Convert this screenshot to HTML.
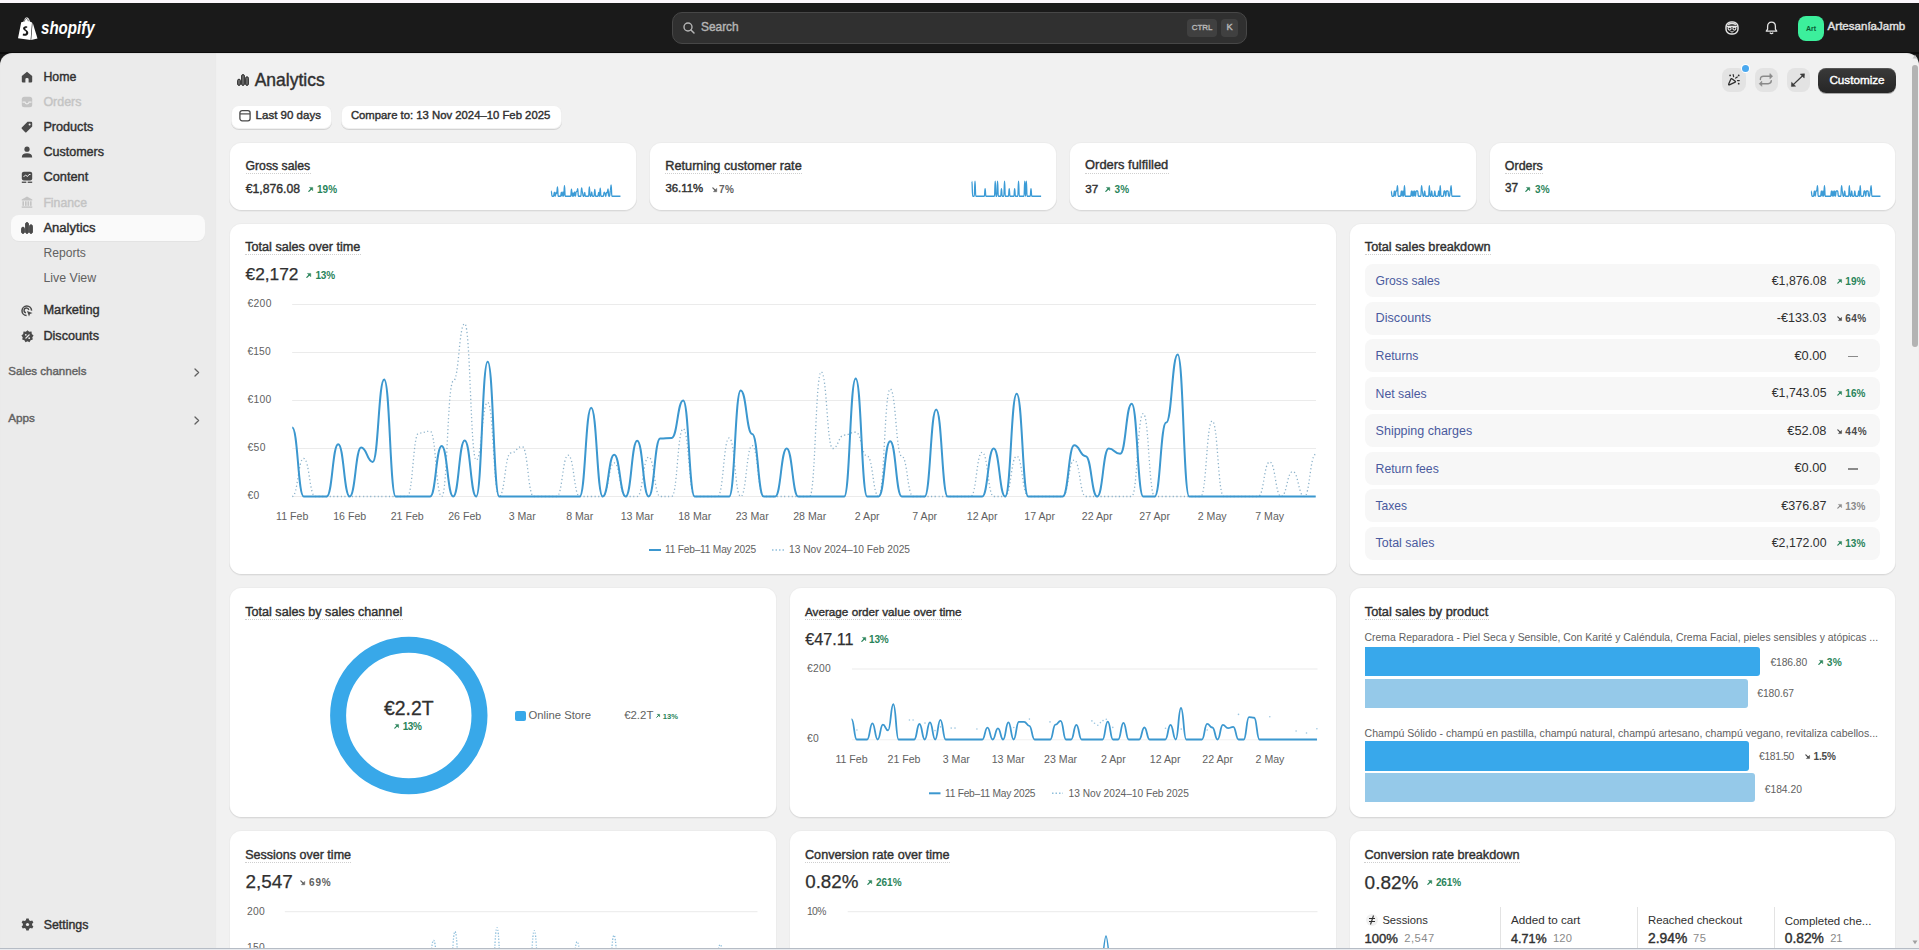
<!DOCTYPE html><html><head><meta charset="utf-8"><title>Analytics</title><style>
*{box-sizing:border-box;margin:0;padding:0}
html,body{width:1919px;height:950px;overflow:hidden;background:#1a1a1a;font-family:"Liberation Sans",sans-serif;}
.a{position:absolute}
.t{position:absolute;white-space:nowrap}
.card{position:absolute;background:#fff;border-radius:12.5px;box-shadow:inset 0 0 0 1px rgba(0,0,0,.075),inset 0 -1px 0 0 rgba(0,0,0,.08),0 1px 0 0 rgba(0,0,0,.03)}
.ul{border-bottom:1px dotted #c4c4c4;padding-bottom:2px}
svg{position:absolute;overflow:visible}
</style></head><body>
<div class="a" style="left:0.00px;top:0.00px;width:1919.00px;height:3.00px;background:#fcf7fc"></div>
<div class="a" style="left:0.00px;top:51.60px;width:1919.00px;height:2.00px;background:#0c0c0c"></div>
<div class="a" style="left:0.00px;top:52.50px;width:216.00px;height:898.00px;background:#ebebeb;border-top-left-radius:12px;box-shadow:inset 0 1px 1px rgba(0,0,0,.06)"></div>
<div class="a" style="left:216.00px;top:52.50px;width:1703.00px;height:898.00px;background:#f1f1f1;border-top-right-radius:12px;box-shadow:inset 0 1px 1px rgba(0,0,0,.06)"></div>
<div class="a" style="left:0.00px;top:947.60px;width:1919.00px;height:1.20px;background:#b6bcc5"></div>
<div class="a" style="left:0.00px;top:948.80px;width:1919.00px;height:1.20px;background:#e8ebef"></div>
<svg style="left:17px;top:16px" width="22" height="24" viewBox="0 0 22 24">
<path d="M4.2 6.2 L1 22.3 L13.6 24 L15 6.4 L12.8 5.6 C12.6 4.2 12 2.2 10.4 1.6 C9.4 1.3 8.3 1.8 7.6 2.9 C7 3.8 6.6 4.9 6.4 5.7 Z" fill="#fff"/>
<path d="M15.6 6.5 L20.5 22.5 L14.2 23.9 Z" fill="#fff"/>
<path d="M7.3 5.5 C7.6 4.3 8.3 2.6 9.5 2.5 C10.6 2.5 11.1 4 11.3 5.2" fill="none" stroke="#1a1a1a" stroke-width="0.7"/>
<path d="M10.4 10.8 C9.6 10.3 8.6 10.2 7.8 10.4 C6.1 10.8 5.6 12.4 6.5 13.5 C7.3 14.5 8.9 14.9 9.1 16.2 C9.3 17.5 7.9 18.3 6.2 17.5 L5.6 19.3 C7.3 20.2 9.8 20 10.9 18.3 C11.9 16.6 11 15.2 9.6 14.2 C8.7 13.5 8.1 13.1 8.4 12.4 C8.7 11.7 9.5 11.8 10 12.1 Z" fill="#1a1a1a"/>
</svg>
<div class="t " style="top:19.06px;font-size:18.5px;line-height:18.5px;color:#fff;font-weight:700;left:40.70px;font-style:italic;transform-origin:0 0;transform:scaleX(0.816)">shopify</div>
<div class="a" style="left:672.00px;top:12.00px;width:575.00px;height:32.00px;background:#303030;border:1px solid #474747;border-radius:10px"></div>
<svg style="left:683px;top:22px" width="12" height="12" viewBox="0 0 12 12"><circle cx="5" cy="5" r="4" fill="none" stroke="#b5b5b5" stroke-width="1.4"/><path d="M8 8 L11 11" stroke="#b5b5b5" stroke-width="1.5" stroke-linecap="round"/></svg>
<div class="t " style="top:22.39px;font-size:11.9px;line-height:11.9px;color:#b5b5b5;left:701.00px;-webkit-text-stroke:0.4px #b5b5b5;">Search</div>
<div class="a" style="left:1187.00px;top:19.00px;width:30.00px;height:18.00px;background:#404040;border-radius:4px"></div>
<div class="t " style="top:24.13px;font-size:7.93px;line-height:7.93px;color:#b5b5b5;left:1202.00px;transform:translateX(-50%);-webkit-text-stroke:0.4px #b5b5b5;">CTRL</div>
<div class="a" style="left:1221.00px;top:19.00px;width:17.00px;height:18.00px;background:#404040;border-radius:4px"></div>
<div class="t " style="top:23.46px;font-size:9.29px;line-height:9.29px;color:#b5b5b5;left:1229.50px;transform:translateX(-50%);-webkit-text-stroke:0.4px #b5b5b5;">K</div>
<svg style="left:1725px;top:21px" width="14" height="14" viewBox="0 0 14 14"><rect x="1" y="1" width="12" height="12" rx="5" fill="none" stroke="#e3e3e3" stroke-width="1.5"/><path d="M1.5 5.5 H12.5" stroke="#e3e3e3" stroke-width="1.6"/><circle cx="4.6" cy="7.6" r="1.5" fill="none" stroke="#e3e3e3" stroke-width="1.1"/><circle cx="9.4" cy="7.6" r="1.5" fill="none" stroke="#e3e3e3" stroke-width="1.1"/><path d="M5.5 10.5 Q7 11.5 8.5 10.5" stroke="#e3e3e3" stroke-width="1" fill="none"/><path d="M3 3.5 Q7 1.5 11 3.5" stroke="#e3e3e3" stroke-width="1.5" fill="none"/></svg>
<svg style="left:1765px;top:21px" width="13" height="14" viewBox="0 0 13 14"><path d="M6.5 1.2 C4 1.2 2.6 3.1 2.6 5.4 V8.2 L1.3 10.2 H11.7 L10.4 8.2 V5.4 C10.4 3.1 9 1.2 6.5 1.2 Z" fill="none" stroke="#e3e3e3" stroke-width="1.3" stroke-linejoin="round"/><path d="M4.8 11.6 Q6.5 13.6 8.2 11.6" fill="none" stroke="#e3e3e3" stroke-width="1.3"/></svg>
<div class="a" style="left:1798.00px;top:16.00px;width:26.00px;height:25.00px;background:#3cef9c;border-radius:8px"></div>
<div class="t " style="top:25.15px;font-size:7.06px;line-height:7.06px;color:#0b5b36;font-weight:700;left:1811.00px;transform:translateX(-50%);">Art</div>
<div class="t " style="top:21.36px;font-size:11.55px;line-height:11.55px;color:#e3e3e3;left:1827.60px;-webkit-text-stroke:0.4px #e3e3e3;">ArtesaníaJamb</div>
<div class="a" style="left:11.00px;top:215.00px;width:194.00px;height:26.00px;background:#fafafa;border-radius:8px;box-shadow:0 1px 0 rgba(0,0,0,.03)"></div>
<div class="t " style="top:70.98px;font-size:12.33px;line-height:12.33px;color:#303030;left:43.40px;-webkit-text-stroke:0.4px #303030;">Home</div>
<div class="t " style="top:95.91px;font-size:12.47px;line-height:12.47px;color:#c4c4c4;left:43.40px;-webkit-text-stroke:0.4px #c4c4c4;">Orders</div>
<div class="t " style="top:120.82px;font-size:12.65px;line-height:12.65px;color:#303030;left:43.40px;-webkit-text-stroke:0.4px #303030;">Products</div>
<div class="t " style="top:145.86px;font-size:12.56px;line-height:12.56px;color:#303030;left:43.40px;-webkit-text-stroke:0.4px #303030;">Customers</div>
<div class="t " style="top:171.24px;font-size:12.82px;line-height:12.82px;color:#303030;left:43.40px;-webkit-text-stroke:0.4px #303030;">Content</div>
<div class="t " style="top:196.51px;font-size:12.26px;line-height:12.26px;color:#c4c4c4;left:43.40px;-webkit-text-stroke:0.4px #c4c4c4;">Finance</div>
<div class="t " style="top:221.13px;font-size:13.05px;line-height:13.05px;color:#303030;left:43.40px;-webkit-text-stroke:0.4px #303030;">Analytics</div>
<div class="t " style="top:247.08px;font-size:12.11px;line-height:12.11px;color:#616161;left:43.50px;">Reports</div>
<div class="t " style="top:271.96px;font-size:12.37px;line-height:12.37px;color:#616161;left:43.50px;">Live View</div>
<div class="t " style="top:304.44px;font-size:12.82px;line-height:12.82px;color:#303030;left:43.40px;-webkit-text-stroke:0.4px #303030;">Marketing</div>
<div class="t " style="top:329.82px;font-size:12.66px;line-height:12.66px;color:#303030;left:43.40px;-webkit-text-stroke:0.4px #303030;">Discounts</div>
<div class="t " style="top:365.67px;font-size:11.53px;line-height:11.53px;color:#616161;left:8.30px;-webkit-text-stroke:0.4px #616161;">Sales channels</div>
<div class="t " style="top:411.58px;font-size:11.71px;line-height:11.71px;color:#616161;left:8.30px;-webkit-text-stroke:0.4px #616161;">Apps</div>
<svg style="left:194px;top:367.8px" width="6" height="9" viewBox="0 0 6 9"><path d="M1 1 L4.6 4.5 L1 8" fill="none" stroke="#616161" stroke-width="1.3" stroke-linecap="round" stroke-linejoin="round"/></svg>
<svg style="left:194px;top:415.5px" width="6" height="9" viewBox="0 0 6 9"><path d="M1 1 L4.6 4.5 L1 8" fill="none" stroke="#616161" stroke-width="1.3" stroke-linecap="round" stroke-linejoin="round"/></svg>
<div class="t " style="top:918.66px;font-size:12.37px;line-height:12.37px;color:#303030;left:43.75px;-webkit-text-stroke:0.4px #303030;">Settings</div>
<svg style="left:21px;top:71px" width="12" height="12" viewBox="0 0 12 12"><path d="M6 0.8 L11.2 5 V10.6 Q11.2 11.4 10.4 11.4 H7.6 V8 Q7.6 7 6 7 Q4.4 7 4.4 8 V11.4 H1.6 Q0.8 11.4 0.8 10.6 V5 Z" fill="#4a4a4a"/></svg>
<svg style="left:21px;top:96px" width="12" height="12" viewBox="0 0 12 12"><rect x="0.8" y="0.8" width="10.4" height="10.4" rx="2.5" fill="#c4c4c4"/><path d="M1.5 6.2 H4 Q4.5 7.8 6 7.8 Q7.5 7.8 8 6.2 H10.5" fill="none" stroke="#ebebeb" stroke-width="1.2"/></svg>
<svg style="left:21px;top:121px" width="12" height="12" viewBox="0 0 12 12"><path d="M6.5 0.8 H10 Q11.2 0.8 11.2 2 V5.5 L5.4 11.2 Q4.8 11.8 4.2 11.2 L0.8 7.8 Q0.2 7.2 0.8 6.6 Z" fill="#4a4a4a"/><circle cx="8.6" cy="3.4" r="1" fill="#ebebeb"/></svg>
<svg style="left:21px;top:146px" width="12" height="12" viewBox="0 0 12 12"><circle cx="6" cy="3.2" r="2.6" fill="#4a4a4a"/><path d="M0.8 11.4 Q0.8 7.2 6 7.2 Q11.2 7.2 11.2 11.4 Z" fill="#4a4a4a"/></svg>
<svg style="left:21px;top:171px" width="12" height="13" viewBox="0 0 12 13"><rect x="0.8" y="0.8" width="10.4" height="8.6" rx="2" fill="#4a4a4a"/><path d="M2.5 6 L4.5 4 L6.5 5.5 L8 3.5 H9.5" fill="none" stroke="#ebebeb" stroke-width="1"/><rect x="0.8" y="10.6" width="4.5" height="1.3" fill="#4a4a4a"/><rect x="6.7" y="10.6" width="4.5" height="1.3" fill="#4a4a4a"/></svg>
<svg style="left:21px;top:196px" width="12" height="12" viewBox="0 0 12 12"><path d="M6 0.6 L11.3 3.4 V4.6 H0.7 V3.4 Z" fill="#c4c4c4"/><rect x="1.4" y="5.3" width="1.6" height="4.5" fill="#c4c4c4"/><rect x="4" y="5.3" width="1.6" height="4.5" fill="#c4c4c4"/><rect x="6.5" y="5.3" width="1.6" height="4.5" fill="#c4c4c4"/><rect x="9" y="5.3" width="1.6" height="4.5" fill="#c4c4c4"/><rect x="0.7" y="10.4" width="10.6" height="1.4" fill="#c4c4c4"/></svg>
<svg style="left:21px;top:221.5px" width="12" height="12" viewBox="0 0 12 12"><rect x="0.6" y="5.2" width="2.8" height="6.2" rx="1.4" fill="#4a4a4a" stroke="#4a4a4a" stroke-width="1"/><rect x="4.6" y="0.6" width="2.8" height="10.8" rx="1.4" fill="#4a4a4a" stroke="#4a4a4a" stroke-width="1"/><rect x="8.6" y="2.8" width="2.8" height="8.6" rx="1.4" fill="#4a4a4a" stroke="#4a4a4a" stroke-width="1"/></svg>
<svg style="left:21px;top:304.5px" width="12" height="12" viewBox="0 0 12 12"><path d="M10.6 5.6 A4.8 4.8 0 1 0 5.6 10.6" fill="none" stroke="#4a4a4a" stroke-width="1.5"/><path d="M7.8 5 A2.4 2.4 0 1 0 5 7.8" fill="none" stroke="#4a4a4a" stroke-width="1.4"/><path d="M6 6 L11.5 8 L9 9 L8 11.5 Z" fill="#4a4a4a"/></svg>
<svg style="left:20.5px;top:329.5px" width="13" height="13" viewBox="0 0 13 13"><path d="M6.5 0.3 L8.2 1.8 L10.5 1.6 L10.8 3.9 L12.6 5.5 L11.3 7.3 L11.8 9.6 L9.6 10.2 L8.5 12.3 L6.5 11.3 L4.5 12.3 L3.4 10.2 L1.2 9.6 L1.7 7.3 L0.4 5.5 L2.2 3.9 L2.5 1.6 L4.8 1.8 Z" fill="#4a4a4a"/><path d="M4.5 8.5 L8.5 4.5" stroke="#ebebeb" stroke-width="1.1"/><circle cx="4.8" cy="4.8" r="0.9" fill="#ebebeb"/><circle cx="8.2" cy="8.2" r="0.9" fill="#ebebeb"/></svg>
<svg style="left:20.5px;top:918px" width="13" height="13" viewBox="0 0 13 13"><path d="M5.3 0.5 H7.7 L8.1 2.2 L9.6 3 L11.2 2.4 L12.4 4.5 L11.1 5.7 V7.3 L12.4 8.5 L11.2 10.6 L9.6 10 L8.1 10.8 L7.7 12.5 H5.3 L4.9 10.8 L3.4 10 L1.8 10.6 L0.6 8.5 L1.9 7.3 V5.7 L0.6 4.5 L1.8 2.4 L3.4 3 L4.9 2.2 Z" fill="#4a4a4a"/><circle cx="6.5" cy="6.5" r="1.6" fill="#ebebeb"/></svg>
<svg style="left:237px;top:74px" width="12" height="12" viewBox="0 0 12 12"><rect x="0.6" y="5.2" width="2.8" height="6.2" rx="1.4" fill="#6a6a6a" stroke="#303030" stroke-width="1"/><rect x="4.6" y="0.6" width="2.8" height="10.8" rx="1.4" fill="#6a6a6a" stroke="#303030" stroke-width="1"/><rect x="8.6" y="2.8" width="2.8" height="8.6" rx="1.4" fill="#6a6a6a" stroke="#303030" stroke-width="1"/></svg>
<div class="t " style="top:71.76px;font-size:17.49px;line-height:17.49px;color:#303030;left:254.70px;-webkit-text-stroke:0.4px #303030;">Analytics</div>
<div class="a" style="left:231px;top:105px;width:101px;height:23.5px;background:#fff;border-radius:8px;box-shadow:0 1px 0 rgba(0,0,0,.12),inset 0 0 0 1px rgba(0,0,0,.06)"></div>
<div class="a" style="left:341px;top:105px;width:220.5px;height:23.5px;background:#fff;border-radius:8px;box-shadow:0 1px 0 rgba(0,0,0,.12),inset 0 0 0 1px rgba(0,0,0,.06)"></div>
<svg style="left:239px;top:109px" width="12" height="13" viewBox="0 0 12 13"><rect x="0.9" y="1.6" width="10.2" height="10.2" rx="2.2" fill="none" stroke="#4a4a4a" stroke-width="1.3"/><path d="M1 4.9 H11" stroke="#4a4a4a" stroke-width="1.2"/></svg>
<div class="t " style="top:110.27px;font-size:11.53px;line-height:11.53px;color:#303030;left:255.60px;-webkit-text-stroke:0.4px #303030;">Last 90 days</div>
<div class="t " style="top:110.37px;font-size:11.32px;line-height:11.32px;color:#303030;left:350.90px;-webkit-text-stroke:0.4px #303030;">Compare to: 13 Nov 2024–10 Feb 2025</div>
<div class="a" style="left:1722.30px;top:68.20px;width:23.30px;height:24.00px;background:#e3e3e3;border-radius:8px"></div>
<div class="a" style="left:1754.70px;top:68.20px;width:23.30px;height:24.00px;background:#e3e3e3;border-radius:8px"></div>
<div class="a" style="left:1786.80px;top:68.20px;width:23.30px;height:24.00px;background:#e3e3e3;border-radius:8px"></div>
<div class="a" style="left:1741.90px;top:64.70px;width:7.20px;height:7.20px;background:#4aa8ef;border-radius:50%;box-shadow:0 0 0 1px #fff"></div>
<svg style="left:1715px;top:60px" width="100" height="40" viewBox="0 0 100 40">
<path d="M13.7,24.1 L15.9,19.1 Q16.3,18.4 16.9,18.8 L20.3,21.3 Q20.8,21.8 20.2,22.2 L14.4,24.8 Q13.4,25.1 13.7,24.1 Z" fill="none" stroke="#303030" stroke-width="1.3" stroke-linejoin="round"/>
<circle cx="15.1" cy="15.4" r="0.9" fill="#303030"/><circle cx="23.7" cy="15.4" r="0.9" fill="#303030"/><circle cx="23.7" cy="23.7" r="0.9" fill="#303030"/>
<path d="M18.2,14.7 L18.6,16.6 M20.7,18.1 L22.3,17 M22.5,20.6 L24.3,20.6" stroke="#303030" stroke-width="1.2" stroke-linecap="round"/>
<path d="M45.4,19.6 Q45.3,16.2 48.5,16.2 H55.6" fill="none" stroke="#8a8a8a" stroke-width="1.4" stroke-linecap="round"/>
<path d="M54.9,13.6 L57.6,16.2 L54.9,18.8 Z" fill="#8a8a8a" stroke="#8a8a8a" stroke-width="0.6" stroke-linejoin="round"/>
<path d="M56.3,20.6 Q56.3,23.7 53.2,23.7 H46.2" fill="none" stroke="#8a8a8a" stroke-width="1.4" stroke-linecap="round"/>
<path d="M46.8,21.2 L44.2,23.7 L46.8,26.3 Z" fill="#8a8a8a" stroke="#8a8a8a" stroke-width="0.6" stroke-linejoin="round"/>
<path d="M78,24.9 L87.9,15.5" stroke="#3a3a3a" stroke-width="1.3"/>
<path d="M85.2,14.1 L89.5,13.8 L89.2,18.1 Z" fill="#3a3a3a" stroke="#3a3a3a" stroke-width="0.5" stroke-linejoin="round"/>
<path d="M76.6,22.3 L76.4,26.4 L80.6,26.2 Z" fill="#3a3a3a" stroke="#3a3a3a" stroke-width="0.5" stroke-linejoin="round"/>
</svg>
<div class="a" style="left:1818.20px;top:68.20px;width:77.80px;height:24.60px;background:linear-gradient(#3a3a3a,#262626);border-radius:8px;box-shadow:inset 0 1px 0 rgba(255,255,255,.15),0 1px 0 rgba(0,0,0,.3)"></div>
<div class="t " style="top:73.89px;font-size:11.69px;line-height:11.69px;color:#fff;left:1829.40px;-webkit-text-stroke:0.4px #fff;">Customize</div>
<div class="card" style="left:229.30px;top:142.40px;width:407.68px;height:68.60px"></div>
<div class="t " style="top:159.81px;font-size:12.26px;line-height:12.26px;color:#303030;left:245.50px;-webkit-text-stroke:0.4px #303030;">Gross sales</div>
<div class="a" style="left:245.50px;top:173.00px;width:65.00px;height:0;border-top:1px dotted #cfcfcf"></div>
<div class="t " style="top:182.73px;font-size:12.23px;line-height:12.23px;color:#303030;left:245.70px;-webkit-text-stroke:0.4px #303030;">€1,876.08</div>
<svg style="left:307.90px;top:186.70px" width="5.2" height="5.2" viewBox="0 0 10 10"><path d="M1.6 8.4 L6.2 3.8" stroke="#29845a" stroke-width="2.4" stroke-linecap="round"/><path d="M2.6 0.8 H9.2 V7.4 Z" fill="#29845a" stroke="#29845a" stroke-width="0.8" stroke-linejoin="round"/></svg>
<div class="t " style="top:184.82px;font-size:10px;line-height:10px;color:#29845a;font-weight:700;left:317.00px;letter-spacing:0.029px;">19%</div>
<div class="card" style="left:649.08px;top:142.40px;width:407.68px;height:68.60px"></div>
<div class="t " style="top:159.59px;font-size:12.72px;line-height:12.72px;color:#303030;left:665.28px;-webkit-text-stroke:0.4px #303030;">Returning customer rate</div>
<div class="a" style="left:665.28px;top:173.00px;width:136.70px;height:0;border-top:1px dotted #cfcfcf"></div>
<div class="t " style="top:183.15px;font-size:11.37px;line-height:11.37px;color:#303030;left:665.48px;-webkit-text-stroke:0.4px #303030;">36.11%</div>
<svg style="left:711.60px;top:186.70px" width="5.2" height="5.2" viewBox="0 0 10 10"><path d="M1.6 1.6 L6.2 6.2" stroke="#616161" stroke-width="2.4" stroke-linecap="round"/><path d="M9.2 2.6 V9.2 H2.6 Z" fill="#616161" stroke="#616161" stroke-width="0.8" stroke-linejoin="round"/></svg>
<div class="t " style="top:184.82px;font-size:10px;line-height:10px;color:#616161;font-weight:700;left:719.10px;letter-spacing:0.223px;">7%</div>
<div class="card" style="left:1068.85px;top:142.40px;width:407.68px;height:68.60px"></div>
<div class="t " style="top:159.49px;font-size:12.91px;line-height:12.91px;color:#303030;left:1085.05px;-webkit-text-stroke:0.4px #303030;">Orders fulfilled</div>
<div class="a" style="left:1085.05px;top:173.00px;width:83.50px;height:0;border-top:1px dotted #cfcfcf"></div>
<div class="t " style="top:182.99px;font-size:11.69px;line-height:11.69px;color:#303030;left:1085.25px;-webkit-text-stroke:0.4px #303030;">37</div>
<svg style="left:1105.20px;top:186.70px" width="5.2" height="5.2" viewBox="0 0 10 10"><path d="M1.6 8.4 L6.2 3.8" stroke="#29845a" stroke-width="2.4" stroke-linecap="round"/><path d="M2.6 0.8 H9.2 V7.4 Z" fill="#29845a" stroke="#29845a" stroke-width="0.8" stroke-linejoin="round"/></svg>
<div class="t " style="top:184.82px;font-size:10px;line-height:10px;color:#29845a;font-weight:700;left:1114.40px;letter-spacing:0.323px;">3%</div>
<div class="card" style="left:1488.62px;top:142.40px;width:407.68px;height:68.60px"></div>
<div class="t " style="top:159.73px;font-size:12.43px;line-height:12.43px;color:#303030;left:1504.83px;-webkit-text-stroke:0.4px #303030;">Orders</div>
<div class="a" style="left:1504.83px;top:173.00px;width:38.30px;height:0;border-top:1px dotted #cfcfcf"></div>
<div class="t " style="top:182.90px;font-size:11.87px;line-height:11.87px;color:#303030;left:1505.03px;-webkit-text-stroke:0.4px #303030;">37</div>
<svg style="left:1525.40px;top:186.70px" width="5.2" height="5.2" viewBox="0 0 10 10"><path d="M1.6 8.4 L6.2 3.8" stroke="#29845a" stroke-width="2.4" stroke-linecap="round"/><path d="M2.6 0.8 H9.2 V7.4 Z" fill="#29845a" stroke="#29845a" stroke-width="0.8" stroke-linejoin="round"/></svg>
<div class="t " style="top:184.82px;font-size:10px;line-height:10px;color:#29845a;font-weight:700;left:1535.00px;letter-spacing:0.273px;">3%</div>
<div class="card" style="left:229.30px;top:223.20px;width:1107.30px;height:352.20px"></div>
<div class="t " style="top:240.72px;font-size:12.65px;line-height:12.65px;color:#303030;left:245.20px;-webkit-text-stroke:0.4px #303030;">Total sales over time</div>
<div class="a" style="left:245.20px;top:254.10px;width:115.60px;height:0;border-top:1px dotted #cfcfcf"></div>
<div class="t " style="top:266.13px;font-size:17.33px;line-height:17.33px;color:#303030;left:245.50px;-webkit-text-stroke:0.25px #303030">€2,172</div>
<svg style="left:306.10px;top:272.80px" width="5.2" height="5.2" viewBox="0 0 10 10"><path d="M1.6 8.4 L6.2 3.8" stroke="#29845a" stroke-width="2.4" stroke-linecap="round"/><path d="M2.6 0.8 H9.2 V7.4 Z" fill="#29845a" stroke="#29845a" stroke-width="0.8" stroke-linejoin="round"/></svg>
<div class="t " style="top:270.91px;font-size:10px;line-height:10px;color:#29845a;font-weight:700;left:315.40px;letter-spacing:-0.105px;">13%</div>
<div class="t " style="top:298.87px;font-size:10.3px;line-height:10.3px;color:#616161;left:247.40px;letter-spacing:0.372px;">€200</div>
<div class="t " style="top:346.87px;font-size:10.3px;line-height:10.3px;color:#616161;left:247.40px;letter-spacing:0.122px;">€150</div>
<div class="t " style="top:394.87px;font-size:10.3px;line-height:10.3px;color:#616161;left:247.40px;letter-spacing:0.272px;">€100</div>
<div class="t " style="top:442.87px;font-size:10.3px;line-height:10.3px;color:#616161;left:247.40px;letter-spacing:0.439px;">€50</div>
<div class="t " style="top:490.87px;font-size:10.3px;line-height:10.3px;color:#616161;left:247.40px;letter-spacing:0.372px;">€0</div>
<div class="t " style="top:511.02px;font-size:10.6px;line-height:10.6px;color:#616161;left:292.20px;transform:translateX(-50%);">11 Feb</div>
<div class="t " style="top:511.02px;font-size:10.6px;line-height:10.6px;color:#616161;left:349.70px;transform:translateX(-50%);">16 Feb</div>
<div class="t " style="top:511.02px;font-size:10.6px;line-height:10.6px;color:#616161;left:407.20px;transform:translateX(-50%);">21 Feb</div>
<div class="t " style="top:511.02px;font-size:10.6px;line-height:10.6px;color:#616161;left:464.70px;transform:translateX(-50%);">26 Feb</div>
<div class="t " style="top:511.02px;font-size:10.6px;line-height:10.6px;color:#616161;left:522.20px;transform:translateX(-50%);">3 Mar</div>
<div class="t " style="top:511.02px;font-size:10.6px;line-height:10.6px;color:#616161;left:579.70px;transform:translateX(-50%);">8 Mar</div>
<div class="t " style="top:511.02px;font-size:10.6px;line-height:10.6px;color:#616161;left:637.20px;transform:translateX(-50%);">13 Mar</div>
<div class="t " style="top:511.02px;font-size:10.6px;line-height:10.6px;color:#616161;left:694.70px;transform:translateX(-50%);">18 Mar</div>
<div class="t " style="top:511.02px;font-size:10.6px;line-height:10.6px;color:#616161;left:752.20px;transform:translateX(-50%);">23 Mar</div>
<div class="t " style="top:511.02px;font-size:10.6px;line-height:10.6px;color:#616161;left:809.70px;transform:translateX(-50%);">28 Mar</div>
<div class="t " style="top:511.02px;font-size:10.6px;line-height:10.6px;color:#616161;left:867.20px;transform:translateX(-50%);">2 Apr</div>
<div class="t " style="top:511.02px;font-size:10.6px;line-height:10.6px;color:#616161;left:924.70px;transform:translateX(-50%);">7 Apr</div>
<div class="t " style="top:511.02px;font-size:10.6px;line-height:10.6px;color:#616161;left:982.20px;transform:translateX(-50%);">12 Apr</div>
<div class="t " style="top:511.02px;font-size:10.6px;line-height:10.6px;color:#616161;left:1039.70px;transform:translateX(-50%);">17 Apr</div>
<div class="t " style="top:511.02px;font-size:10.6px;line-height:10.6px;color:#616161;left:1097.20px;transform:translateX(-50%);">22 Apr</div>
<div class="t " style="top:511.02px;font-size:10.6px;line-height:10.6px;color:#616161;left:1154.70px;transform:translateX(-50%);">27 Apr</div>
<div class="t " style="top:511.02px;font-size:10.6px;line-height:10.6px;color:#616161;left:1212.20px;transform:translateX(-50%);">2 May</div>
<div class="t " style="top:511.02px;font-size:10.6px;line-height:10.6px;color:#616161;left:1269.70px;transform:translateX(-50%);">7 May</div>
<div class="t " style="top:545.02px;font-size:10.2px;line-height:10.2px;color:#616161;left:665.00px;letter-spacing:-0.216px;">11 Feb–11 May 2025</div>
<div class="t " style="top:545.01px;font-size:10.22px;line-height:10.22px;color:#616161;left:789.00px;">13 Nov 2024–10 Feb 2025</div>
<div class="card" style="left:1348.70px;top:223.20px;width:547.60px;height:352.20px"></div>
<div class="t " style="top:240.69px;font-size:12.71px;line-height:12.71px;color:#303030;left:1364.80px;-webkit-text-stroke:0.4px #303030;">Total sales breakdown</div>
<div class="a" style="left:1364.80px;top:254.10px;width:126.10px;height:0;border-top:1px dotted #cfcfcf"></div>
<div class="a" style="left:1364.80px;top:264.40px;width:515.20px;height:33.00px;background:#f7f7f7;border-radius:8px"></div>
<div class="t " style="top:275.06px;font-size:12.16px;line-height:12.16px;color:#4a5a9e;left:1375.60px;">Gross sales</div>
<div class="t " style="top:274.99px;font-size:12.3px;line-height:12.3px;color:#303030;right:92.50px;text-align:right;">€1,876.08</div>
<svg style="left:1837.00px;top:278.80px" width="5" height="5" viewBox="0 0 10 10"><path d="M1.6 8.4 L6.2 3.8" stroke="#29845a" stroke-width="2.4" stroke-linecap="round"/><path d="M2.6 0.8 H9.2 V7.4 Z" fill="#29845a" stroke="#29845a" stroke-width="0.8" stroke-linejoin="round"/></svg>
<div class="t " style="top:276.81px;font-size:10px;line-height:10px;color:#29845a;font-weight:700;left:1845.30px;letter-spacing:0.029px;">19%</div>
<div class="a" style="left:1364.80px;top:301.90px;width:515.20px;height:33.00px;background:#f7f7f7;border-radius:8px"></div>
<div class="t " style="top:312.33px;font-size:12.64px;line-height:12.64px;color:#4a5a9e;left:1375.60px;">Discounts</div>
<div class="t " style="top:312.35px;font-size:12.59px;line-height:12.59px;color:#303030;right:92.50px;text-align:right;">-€133.03</div>
<svg style="left:1837.00px;top:316.30px" width="5" height="5" viewBox="0 0 10 10"><path d="M1.6 1.6 L6.2 6.2" stroke="#4a4a4a" stroke-width="2.4" stroke-linecap="round"/><path d="M9.2 2.6 V9.2 H2.6 Z" fill="#4a4a4a" stroke="#4a4a4a" stroke-width="0.8" stroke-linejoin="round"/></svg>
<div class="t " style="top:314.31px;font-size:10px;line-height:10px;color:#4a4a4a;font-weight:700;left:1845.30px;letter-spacing:0.429px;">64%</div>
<div class="a" style="left:1364.80px;top:339.40px;width:515.20px;height:33.00px;background:#f7f7f7;border-radius:8px"></div>
<div class="t " style="top:350.03px;font-size:12.22px;line-height:12.22px;color:#4a5a9e;left:1375.60px;">Returns</div>
<div class="t " style="top:349.73px;font-size:12.83px;line-height:12.83px;color:#303030;right:92.50px;text-align:right;">€0.00</div>
<div class="a" style="left:1847.50px;top:355.90px;width:10.50px;height:1.20px;background:#8a8a8a"></div>
<div class="a" style="left:1364.80px;top:376.90px;width:515.20px;height:33.00px;background:#f7f7f7;border-radius:8px"></div>
<div class="t " style="top:387.52px;font-size:12.24px;line-height:12.24px;color:#4a5a9e;left:1375.60px;">Net sales</div>
<div class="t " style="top:387.49px;font-size:12.3px;line-height:12.3px;color:#303030;right:92.50px;text-align:right;">€1,743.05</div>
<svg style="left:1837.00px;top:391.30px" width="5" height="5" viewBox="0 0 10 10"><path d="M1.6 8.4 L6.2 3.8" stroke="#29845a" stroke-width="2.4" stroke-linecap="round"/><path d="M2.6 0.8 H9.2 V7.4 Z" fill="#29845a" stroke="#29845a" stroke-width="0.8" stroke-linejoin="round"/></svg>
<div class="t " style="top:389.31px;font-size:10px;line-height:10px;color:#29845a;font-weight:700;left:1845.30px;letter-spacing:0.029px;">16%</div>
<div class="a" style="left:1364.80px;top:414.40px;width:515.20px;height:33.00px;background:#f7f7f7;border-radius:8px"></div>
<div class="t " style="top:424.89px;font-size:12.5px;line-height:12.5px;color:#4a5a9e;left:1375.60px;">Shipping charges</div>
<div class="t " style="top:424.74px;font-size:12.82px;line-height:12.82px;color:#303030;right:92.50px;text-align:right;">€52.08</div>
<svg style="left:1837.00px;top:428.80px" width="5" height="5" viewBox="0 0 10 10"><path d="M1.6 1.6 L6.2 6.2" stroke="#4a4a4a" stroke-width="2.4" stroke-linecap="round"/><path d="M9.2 2.6 V9.2 H2.6 Z" fill="#4a4a4a" stroke="#4a4a4a" stroke-width="0.8" stroke-linejoin="round"/></svg>
<div class="t " style="top:426.81px;font-size:10px;line-height:10px;color:#4a4a4a;font-weight:700;left:1845.30px;letter-spacing:0.662px;">44%</div>
<div class="a" style="left:1364.80px;top:451.90px;width:515.20px;height:33.00px;background:#f7f7f7;border-radius:8px"></div>
<div class="t " style="top:462.53px;font-size:12.23px;line-height:12.23px;color:#4a5a9e;left:1375.60px;">Return fees</div>
<div class="t " style="top:462.23px;font-size:12.83px;line-height:12.83px;color:#303030;right:92.50px;text-align:right;">€0.00</div>
<div class="a" style="left:1847.50px;top:468.40px;width:10.50px;height:1.20px;background:#8a8a8a"></div>
<div class="a" style="left:1364.80px;top:489.40px;width:515.20px;height:33.00px;background:#f7f7f7;border-radius:8px"></div>
<div class="t " style="top:500.11px;font-size:12.06px;line-height:12.06px;color:#4a5a9e;left:1375.60px;">Taxes</div>
<div class="t " style="top:499.89px;font-size:12.51px;line-height:12.51px;color:#303030;right:92.50px;text-align:right;">€376.87</div>
<svg style="left:1837.00px;top:503.80px" width="5" height="5" viewBox="0 0 10 10"><path d="M1.6 8.4 L6.2 3.8" stroke="#8a8a8a" stroke-width="2.4" stroke-linecap="round"/><path d="M2.6 0.8 H9.2 V7.4 Z" fill="#8a8a8a" stroke="#8a8a8a" stroke-width="0.8" stroke-linejoin="round"/></svg>
<div class="t " style="top:501.81px;font-size:10px;line-height:10px;color:#8a8a8a;font-weight:700;left:1845.30px;letter-spacing:-0.005px;">13%</div>
<div class="a" style="left:1364.80px;top:526.90px;width:515.20px;height:33.00px;background:#f7f7f7;border-radius:8px"></div>
<div class="t " style="top:537.42px;font-size:12.45px;line-height:12.45px;color:#4a5a9e;left:1375.60px;">Total sales</div>
<div class="t " style="top:537.49px;font-size:12.3px;line-height:12.3px;color:#303030;right:92.50px;text-align:right;">€2,172.00</div>
<svg style="left:1837.00px;top:541.30px" width="5" height="5" viewBox="0 0 10 10"><path d="M1.6 8.4 L6.2 3.8" stroke="#29845a" stroke-width="2.4" stroke-linecap="round"/><path d="M2.6 0.8 H9.2 V7.4 Z" fill="#29845a" stroke="#29845a" stroke-width="0.8" stroke-linejoin="round"/></svg>
<div class="t " style="top:539.31px;font-size:10px;line-height:10px;color:#29845a;font-weight:700;left:1845.30px;letter-spacing:-0.005px;">13%</div>
<div class="card" style="left:229.30px;top:586.60px;width:547.60px;height:231.60px"></div>
<div class="card" style="left:789.00px;top:586.60px;width:547.60px;height:231.60px"></div>
<div class="card" style="left:1348.70px;top:586.60px;width:547.60px;height:231.60px"></div>
<div class="t " style="top:605.64px;font-size:12.62px;line-height:12.62px;color:#303030;left:245.20px;-webkit-text-stroke:0.4px #303030;">Total sales by sales channel</div>
<div class="a" style="left:245.20px;top:619.00px;width:157.40px;height:0;border-top:1px dotted #cfcfcf"></div>
<div class="t " style="top:698.82px;font-size:19.4px;line-height:19.4px;color:#303030;left:408.80px;transform:translateX(-50%);-webkit-text-stroke:0.3px #303030">€2.2T</div>
<svg style="left:394.20px;top:723.80px" width="5" height="5" viewBox="0 0 10 10"><path d="M1.6 8.4 L6.2 3.8" stroke="#29845a" stroke-width="2.4" stroke-linecap="round"/><path d="M2.6 0.8 H9.2 V7.4 Z" fill="#29845a" stroke="#29845a" stroke-width="0.8" stroke-linejoin="round"/></svg>
<div class="t " style="top:721.81px;font-size:10px;line-height:10px;color:#29845a;font-weight:700;left:402.65px;letter-spacing:-0.355px;">13%</div>
<div class="a" style="left:514.80px;top:710.50px;width:10.80px;height:10.80px;background:#38a8e9;border-radius:2px"></div>
<div class="t " style="top:709.89px;font-size:11.28px;line-height:11.28px;color:#616161;left:528.50px;">Online Store</div>
<div class="t " style="top:709.82px;font-size:11.42px;line-height:11.42px;color:#616161;left:624.20px;">€2.2T</div>
<svg style="left:656.30px;top:714.00px" width="4" height="4" viewBox="0 0 10 10"><path d="M1.6 8.4 L6.2 3.8" stroke="#29845a" stroke-width="2.4" stroke-linecap="round"/><path d="M2.6 0.8 H9.2 V7.4 Z" fill="#29845a" stroke="#29845a" stroke-width="0.8" stroke-linejoin="round"/></svg>
<div class="t " style="top:712.69px;font-size:7.6px;line-height:7.6px;color:#29845a;font-weight:700;left:662.70px;letter-spacing:-0.004px;">13%</div>
<div class="t " style="top:606.08px;font-size:11.71px;line-height:11.71px;color:#303030;left:805.00px;-webkit-text-stroke:0.4px #303030;">Average order value over time</div>
<div class="a" style="left:805.00px;top:619.00px;width:157.00px;height:0;border-top:1px dotted #cfcfcf"></div>
<div class="t " style="top:631.39px;font-size:16.19px;line-height:16.19px;color:#303030;left:805.20px;-webkit-text-stroke:0.25px #303030">€47.11</div>
<svg style="left:861.00px;top:636.80px" width="5.2" height="5.2" viewBox="0 0 10 10"><path d="M1.6 8.4 L6.2 3.8" stroke="#29845a" stroke-width="2.4" stroke-linecap="round"/><path d="M2.6 0.8 H9.2 V7.4 Z" fill="#29845a" stroke="#29845a" stroke-width="0.8" stroke-linejoin="round"/></svg>
<div class="t " style="top:634.91px;font-size:10px;line-height:10px;color:#29845a;font-weight:700;left:869.00px;letter-spacing:-0.138px;">13%</div>
<div class="t " style="top:663.87px;font-size:10.3px;line-height:10.3px;color:#616161;left:806.90px;letter-spacing:0.272px;">€200</div>
<div class="t " style="top:734.17px;font-size:10.3px;line-height:10.3px;color:#616161;left:806.90px;letter-spacing:0.372px;">€0</div>
<div class="t " style="top:754.22px;font-size:10.6px;line-height:10.6px;color:#616161;left:851.50px;transform:translateX(-50%);">11 Feb</div>
<div class="t " style="top:754.22px;font-size:10.6px;line-height:10.6px;color:#616161;left:904.00px;transform:translateX(-50%);">21 Feb</div>
<div class="t " style="top:754.22px;font-size:10.6px;line-height:10.6px;color:#616161;left:956.30px;transform:translateX(-50%);">3 Mar</div>
<div class="t " style="top:754.22px;font-size:10.6px;line-height:10.6px;color:#616161;left:1008.20px;transform:translateX(-50%);">13 Mar</div>
<div class="t " style="top:754.22px;font-size:10.6px;line-height:10.6px;color:#616161;left:1060.60px;transform:translateX(-50%);">23 Mar</div>
<div class="t " style="top:754.22px;font-size:10.6px;line-height:10.6px;color:#616161;left:1113.30px;transform:translateX(-50%);">2 Apr</div>
<div class="t " style="top:754.22px;font-size:10.6px;line-height:10.6px;color:#616161;left:1165.20px;transform:translateX(-50%);">12 Apr</div>
<div class="t " style="top:754.22px;font-size:10.6px;line-height:10.6px;color:#616161;left:1217.70px;transform:translateX(-50%);">22 Apr</div>
<div class="t " style="top:754.22px;font-size:10.6px;line-height:10.6px;color:#616161;left:1270.00px;transform:translateX(-50%);">2 May</div>
<div class="t " style="top:788.92px;font-size:10.2px;line-height:10.2px;color:#616161;left:945.00px;letter-spacing:-0.249px;">11 Feb–11 May 2025</div>
<div class="t " style="top:788.93px;font-size:10.17px;line-height:10.17px;color:#616161;left:1068.60px;">13 Nov 2024–10 Feb 2025</div>
<div class="t " style="top:605.56px;font-size:12.77px;line-height:12.77px;color:#303030;left:1364.80px;-webkit-text-stroke:0.4px #303030;">Total sales by product</div>
<div class="a" style="left:1364.80px;top:619.00px;width:123.80px;height:0;border-top:1px dotted #cfcfcf"></div>
<div class="t " style="top:633.42px;font-size:10.4px;line-height:10.4px;color:#616161;left:1364.60px;">Crema Reparadora - Piel Seca y Sensible, Con Karité y Caléndula, Crema Facial, pieles sensibles y atópicas ...</div>
<div class="a" style="left:1364.60px;top:646.90px;width:395.90px;height:29.40px;background:#38a8eb;border-radius:0 3px 3px 0"></div>
<div class="a" style="left:1364.60px;top:679.00px;width:383.10px;height:28.60px;background:#95c9e9;border-radius:0 3px 3px 0"></div>
<div class="t " style="top:657.57px;font-size:10.3px;line-height:10.3px;color:#616161;left:1770.40px;letter-spacing:-0.075px;">€186.80</div>
<svg style="left:1817.70px;top:659.60px" width="5.2" height="5.2" viewBox="0 0 10 10"><path d="M1.6 8.4 L6.2 3.8" stroke="#29845a" stroke-width="2.4" stroke-linecap="round"/><path d="M2.6 0.8 H9.2 V7.4 Z" fill="#29845a" stroke="#29845a" stroke-width="0.8" stroke-linejoin="round"/></svg>
<div class="t " style="top:657.62px;font-size:10.2px;line-height:10.2px;color:#29845a;font-weight:700;left:1826.70px;letter-spacing:0.379px;">3%</div>
<div class="t " style="top:688.57px;font-size:10.3px;line-height:10.3px;color:#616161;left:1757.30px;letter-spacing:-0.075px;">€180.67</div>
<div class="t " style="top:727.55px;font-size:10.54px;line-height:10.54px;color:#616161;left:1364.60px;">Champú Sólido - champú en pastilla, champú natural, champú artesano, champú vegano, revitaliza cabellos...</div>
<div class="a" style="left:1364.60px;top:741.10px;width:384.50px;height:29.50px;background:#38a8eb;border-radius:0 3px 3px 0"></div>
<div class="a" style="left:1364.60px;top:773.20px;width:390.40px;height:29.20px;background:#95c9e9;border-radius:0 3px 3px 0"></div>
<div class="t " style="top:751.77px;font-size:10.3px;line-height:10.3px;color:#616161;left:1759.00px;letter-spacing:-0.318px;">€181.50</div>
<svg style="left:1805.00px;top:754.00px" width="5" height="5" viewBox="0 0 10 10"><path d="M1.6 1.6 L6.2 6.2" stroke="#4a4a4a" stroke-width="2.4" stroke-linecap="round"/><path d="M9.2 2.6 V9.2 H2.6 Z" fill="#4a4a4a" stroke="#4a4a4a" stroke-width="0.8" stroke-linejoin="round"/></svg>
<div class="t " style="top:752.01px;font-size:10px;line-height:10px;color:#4a4a4a;font-weight:700;left:1813.60px;letter-spacing:-0.198px;">1.5%</div>
<div class="t " style="top:784.57px;font-size:10.3px;line-height:10.3px;color:#616161;left:1764.70px;letter-spacing:-0.004px;">€184.20</div>
<div class="card" style="left:229.30px;top:829.90px;width:547.60px;height:142.00px"></div>
<div class="card" style="left:789.00px;top:829.90px;width:547.60px;height:142.00px"></div>
<div class="card" style="left:1348.70px;top:829.90px;width:547.60px;height:142.00px"></div>
<div class="t " style="top:848.67px;font-size:12.54px;line-height:12.54px;color:#303030;left:245.20px;-webkit-text-stroke:0.4px #303030;">Sessions over time</div>
<div class="a" style="left:245.20px;top:862.00px;width:106.20px;height:0;border-top:1px dotted #cfcfcf"></div>
<div class="t " style="top:873.27px;font-size:18.9px;line-height:18.9px;color:#303030;left:245.40px;-webkit-text-stroke:0.25px #303030">2,547</div>
<svg style="left:300.20px;top:879.90px" width="5.2" height="5.2" viewBox="0 0 10 10"><path d="M1.6 1.6 L6.2 6.2" stroke="#616161" stroke-width="2.4" stroke-linecap="round"/><path d="M9.2 2.6 V9.2 H2.6 Z" fill="#616161" stroke="#616161" stroke-width="0.8" stroke-linejoin="round"/></svg>
<div class="t " style="top:878.01px;font-size:10px;line-height:10px;color:#616161;font-weight:700;left:309.10px;letter-spacing:0.762px;">69%</div>
<div class="t " style="top:906.57px;font-size:10.3px;line-height:10.3px;color:#616161;left:246.90px;letter-spacing:0.306px;">200</div>
<div class="t " style="top:942.67px;font-size:10.3px;line-height:10.3px;color:#616161;left:246.90px;letter-spacing:0.306px;">150</div>
<div class="t " style="top:848.63px;font-size:12.64px;line-height:12.64px;color:#303030;left:805.00px;-webkit-text-stroke:0.4px #303030;">Conversion rate over time</div>
<div class="a" style="left:805.00px;top:862.00px;width:145.00px;height:0;border-top:1px dotted #cfcfcf"></div>
<div class="t " style="top:873.32px;font-size:18.8px;line-height:18.8px;color:#303030;left:805.20px;-webkit-text-stroke:0.25px #303030">0.82%</div>
<svg style="left:866.90px;top:879.80px" width="5.2" height="5.2" viewBox="0 0 10 10"><path d="M1.6 8.4 L6.2 3.8" stroke="#29845a" stroke-width="2.4" stroke-linecap="round"/><path d="M2.6 0.8 H9.2 V7.4 Z" fill="#29845a" stroke="#29845a" stroke-width="0.8" stroke-linejoin="round"/></svg>
<div class="t " style="top:877.91px;font-size:10px;line-height:10px;color:#29845a;font-weight:700;left:875.90px;letter-spacing:0.031px;">261%</div>
<div class="t " style="top:906.57px;font-size:10.3px;line-height:10.3px;color:#616161;left:806.90px;letter-spacing:-0.538px;">10%</div>
<div class="t " style="top:848.70px;font-size:12.7px;line-height:12.7px;color:#303030;left:1364.40px;-webkit-text-stroke:0.4px #303030;">Conversion rate breakdown</div>
<div class="a" style="left:1364.40px;top:862.10px;width:155.60px;height:0;border-top:1px dotted #cfcfcf"></div>
<div class="t " style="top:873.11px;font-size:19.01px;line-height:19.01px;color:#303030;left:1364.60px;-webkit-text-stroke:0.25px #303030">0.82%</div>
<svg style="left:1426.90px;top:879.80px" width="5.2" height="5.2" viewBox="0 0 10 10"><path d="M1.6 8.4 L6.2 3.8" stroke="#29845a" stroke-width="2.4" stroke-linecap="round"/><path d="M2.6 0.8 H9.2 V7.4 Z" fill="#29845a" stroke="#29845a" stroke-width="0.8" stroke-linejoin="round"/></svg>
<div class="t " style="top:877.91px;font-size:10px;line-height:10px;color:#29845a;font-weight:700;left:1435.90px;letter-spacing:-0.144px;">261%</div>
<div class="a" style="left:1500.00px;top:907.00px;width:1.00px;height:50.00px;background:#e3e3e3"></div>
<div class="a" style="left:1637.30px;top:907.00px;width:1.00px;height:50.00px;background:#e3e3e3"></div>
<div class="a" style="left:1774.30px;top:907.00px;width:1.00px;height:50.00px;background:#e3e3e3"></div>
<svg style="left:1366px;top:914px" width="12" height="12" viewBox="0 0 12 12"><circle cx="6" cy="6" r="6" fill="#f1f1f1"/><path d="M3 4.5 H9 M3 7.5 H9 M7.5 1.5 L4.5 10.5" stroke="#303030" stroke-width="1.1"/></svg>
<div class="t " style="top:914.62px;font-size:11.21px;line-height:11.21px;color:#303030;left:1382.40px;">Sessions</div>
<div class="t " style="top:914.40px;font-size:11.67px;line-height:11.67px;color:#303030;left:1511.00px;">Added to cart</div>
<div class="t " style="top:914.55px;font-size:11.37px;line-height:11.37px;color:#303030;left:1648.00px;">Reached checkout</div>
<div class="t " style="top:915.59px;font-size:11.48px;line-height:11.48px;color:#303030;left:1784.70px;">Completed che...</div>
<div class="t " style="top:932.30px;font-size:13.1px;line-height:13.1px;color:#303030;left:1364.40px;-webkit-text-stroke:0.4px #303030;">100%</div>
<div class="t " style="top:933.43px;font-size:11.2px;line-height:11.2px;color:#8a8a8a;left:1404.20px;letter-spacing:0.495px;">2,547</div>
<div class="t " style="top:932.56px;font-size:12.56px;line-height:12.56px;color:#303030;left:1511.00px;-webkit-text-stroke:0.4px #303030;">4.71%</div>
<div class="t " style="top:933.43px;font-size:11.2px;line-height:11.2px;color:#8a8a8a;left:1552.90px;letter-spacing:0.238px;">120</div>
<div class="t " style="top:931.94px;font-size:13.83px;line-height:13.83px;color:#303030;left:1648.00px;-webkit-text-stroke:0.4px #303030;">2.94%</div>
<div class="t " style="top:933.43px;font-size:11.2px;line-height:11.2px;color:#8a8a8a;left:1692.90px;letter-spacing:0.522px;">75</div>
<div class="t " style="top:931.94px;font-size:13.83px;line-height:13.83px;color:#303030;left:1784.70px;-webkit-text-stroke:0.4px #303030;">0.82%</div>
<div class="t " style="top:933.43px;font-size:11.2px;line-height:11.2px;color:#8a8a8a;left:1830.20px;letter-spacing:-0.228px;">21</div>
<div class="a" style="left:1912.00px;top:65.00px;width:5.50px;height:282.00px;background:#b3b3b3;border-radius:3px"></div>
<svg style="left:1912px;top:54px" width="6" height="5" viewBox="0 0 6 5"><path d="M0.5 4.5 L3 0.8 L5.5 4.5 Z" fill="#c4c4c4"/></svg>
<svg style="left:1912px;top:940px" width="6" height="5" viewBox="0 0 6 5"><path d="M0.5 0.5 L3 4.2 L5.5 0.5 Z" fill="#a0a0a0"/></svg>
<svg style="left:0;top:0;pointer-events:none" width="1919" height="950" viewBox="0 0 1919 950"><path d="M551.25,190.79C551.64,190.79 551.64,196.25 552.03,196.25C552.42,196.25 552.42,196.25 552.81,196.25C553.19,196.25 553.19,196.25 553.58,196.25C553.97,196.25 553.97,192.11 554.36,192.11C554.75,192.11 554.75,196.25 555.14,196.25C555.53,196.25 555.53,192.37 555.92,192.37C556.30,192.37 556.30,193.51 556.69,193.51C557.08,193.51 557.08,186.98 557.47,186.98C557.86,186.98 557.86,196.25 558.25,196.25C558.64,196.25 558.64,196.25 559.03,196.25C559.41,196.25 559.41,196.25 559.80,196.25C560.19,196.25 560.19,196.25 560.58,196.25C560.97,196.25 560.97,192.24 561.36,192.24C561.75,192.24 561.75,196.25 562.14,196.25C562.52,196.25 562.52,191.81 562.91,191.81C563.30,191.81 563.30,196.25 563.69,196.25C564.08,196.25 564.08,185.58 564.47,185.58C564.86,185.58 564.86,196.25 565.25,196.25C565.63,196.25 565.63,196.25 566.02,196.25C566.41,196.25 566.41,196.25 566.80,196.25C567.19,196.25 567.19,196.25 567.58,196.25C567.97,196.25 567.97,196.25 568.36,196.25C568.74,196.25 568.74,196.25 569.13,196.25C569.52,196.25 569.52,196.25 569.91,196.25C570.30,196.25 570.30,196.25 570.69,196.25C571.08,196.25 571.08,189.22 571.47,189.22C571.85,189.22 571.85,196.25 572.24,196.25C572.63,196.25 572.63,192.94 573.02,192.94C573.41,192.94 573.41,196.25 573.80,196.25C574.19,196.25 574.19,191.84 574.58,191.84C574.96,191.84 574.96,196.25 575.35,196.25C575.74,196.25 575.74,191.67 576.13,191.67C576.52,191.67 576.52,191.61 576.91,191.61C577.30,191.61 577.30,188.65 577.69,188.65C578.07,188.65 578.07,196.25 578.46,196.25C578.85,196.25 578.85,196.25 579.24,196.25C579.63,196.25 579.63,196.25 580.02,196.25C580.41,196.25 580.41,196.25 580.80,196.25C581.18,196.25 581.18,187.86 581.57,187.86C581.96,187.86 581.96,191.31 582.35,191.31C582.74,191.31 582.74,196.25 583.13,196.25C583.52,196.25 583.52,196.25 583.91,196.25C584.29,196.25 584.29,192.45 584.68,192.45C585.07,192.45 585.07,196.25 585.46,196.25C585.85,196.25 585.85,196.25 586.24,196.25C586.63,196.25 586.63,196.25 587.02,196.25C587.41,196.25 587.41,196.25 587.79,196.25C588.18,196.25 588.18,196.25 588.57,196.25C588.96,196.25 588.96,186.90 589.35,186.90C589.74,186.90 589.74,196.25 590.13,196.25C590.52,196.25 590.52,196.25 590.90,196.25C591.29,196.25 591.29,191.88 591.68,191.88C592.07,191.88 592.07,196.25 592.46,196.25C592.85,196.25 592.85,196.25 593.24,196.25C593.63,196.25 593.63,196.25 594.01,196.25C594.40,196.25 594.40,189.36 594.79,189.36C595.18,189.36 595.18,196.25 595.57,196.25C595.96,196.25 595.96,196.25 596.35,196.25C596.74,196.25 596.74,196.25 597.12,196.25C597.51,196.25 597.51,196.25 597.90,196.25C598.29,196.25 598.29,192.45 598.68,192.45C599.07,192.45 599.07,196.25 599.46,196.25C599.85,196.25 599.85,188.12 600.23,188.12C600.62,188.12 600.62,196.25 601.01,196.25C601.40,196.25 601.40,196.25 601.79,196.25C602.18,196.25 602.18,196.25 602.57,196.25C602.96,196.25 602.96,196.25 603.34,196.25C603.73,196.25 603.73,192.20 604.12,192.20C604.51,192.20 604.51,193.06 604.90,193.06C605.29,193.06 605.29,196.25 605.68,196.25C606.07,196.25 606.07,192.45 606.45,192.45C606.84,192.45 606.84,192.87 607.23,192.87C607.62,192.87 607.62,188.90 608.01,188.90C608.40,188.90 608.40,196.25 608.79,196.25C609.18,196.25 609.18,196.25 609.56,196.25C609.95,196.25 609.95,190.40 610.34,190.40C610.73,190.40 610.73,185.00 611.12,185.00C611.51,185.00 611.51,196.25 611.90,196.25C612.29,196.25 612.29,196.25 612.67,196.25C613.06,196.25 613.06,196.25 613.45,196.25C613.84,196.25 613.84,196.25 614.23,196.25C614.62,196.25 614.62,196.25 615.01,196.25C615.40,196.25 615.40,196.25 615.78,196.25C616.17,196.25 616.17,196.25 616.56,196.25C616.95,196.25 616.95,196.25 617.34,196.25C617.73,196.25 617.73,196.25 618.12,196.25C618.51,196.25 618.51,196.25 618.89,196.25C619.28,196.25 619.28,196.25 619.67,196.25C620.06,196.25 620.06,196.25 620.45,196.25 L620.45,196.25 L551.25,196.25 Z" fill="#3b9bd6" fill-opacity="0.12"/><path d="M551.25,190.79C551.64,190.79 551.64,196.25 552.03,196.25C552.42,196.25 552.42,196.25 552.81,196.25C553.19,196.25 553.19,196.25 553.58,196.25C553.97,196.25 553.97,192.11 554.36,192.11C554.75,192.11 554.75,196.25 555.14,196.25C555.53,196.25 555.53,192.37 555.92,192.37C556.30,192.37 556.30,193.51 556.69,193.51C557.08,193.51 557.08,186.98 557.47,186.98C557.86,186.98 557.86,196.25 558.25,196.25C558.64,196.25 558.64,196.25 559.03,196.25C559.41,196.25 559.41,196.25 559.80,196.25C560.19,196.25 560.19,196.25 560.58,196.25C560.97,196.25 560.97,192.24 561.36,192.24C561.75,192.24 561.75,196.25 562.14,196.25C562.52,196.25 562.52,191.81 562.91,191.81C563.30,191.81 563.30,196.25 563.69,196.25C564.08,196.25 564.08,185.58 564.47,185.58C564.86,185.58 564.86,196.25 565.25,196.25C565.63,196.25 565.63,196.25 566.02,196.25C566.41,196.25 566.41,196.25 566.80,196.25C567.19,196.25 567.19,196.25 567.58,196.25C567.97,196.25 567.97,196.25 568.36,196.25C568.74,196.25 568.74,196.25 569.13,196.25C569.52,196.25 569.52,196.25 569.91,196.25C570.30,196.25 570.30,196.25 570.69,196.25C571.08,196.25 571.08,189.22 571.47,189.22C571.85,189.22 571.85,196.25 572.24,196.25C572.63,196.25 572.63,192.94 573.02,192.94C573.41,192.94 573.41,196.25 573.80,196.25C574.19,196.25 574.19,191.84 574.58,191.84C574.96,191.84 574.96,196.25 575.35,196.25C575.74,196.25 575.74,191.67 576.13,191.67C576.52,191.67 576.52,191.61 576.91,191.61C577.30,191.61 577.30,188.65 577.69,188.65C578.07,188.65 578.07,196.25 578.46,196.25C578.85,196.25 578.85,196.25 579.24,196.25C579.63,196.25 579.63,196.25 580.02,196.25C580.41,196.25 580.41,196.25 580.80,196.25C581.18,196.25 581.18,187.86 581.57,187.86C581.96,187.86 581.96,191.31 582.35,191.31C582.74,191.31 582.74,196.25 583.13,196.25C583.52,196.25 583.52,196.25 583.91,196.25C584.29,196.25 584.29,192.45 584.68,192.45C585.07,192.45 585.07,196.25 585.46,196.25C585.85,196.25 585.85,196.25 586.24,196.25C586.63,196.25 586.63,196.25 587.02,196.25C587.41,196.25 587.41,196.25 587.79,196.25C588.18,196.25 588.18,196.25 588.57,196.25C588.96,196.25 588.96,186.90 589.35,186.90C589.74,186.90 589.74,196.25 590.13,196.25C590.52,196.25 590.52,196.25 590.90,196.25C591.29,196.25 591.29,191.88 591.68,191.88C592.07,191.88 592.07,196.25 592.46,196.25C592.85,196.25 592.85,196.25 593.24,196.25C593.63,196.25 593.63,196.25 594.01,196.25C594.40,196.25 594.40,189.36 594.79,189.36C595.18,189.36 595.18,196.25 595.57,196.25C595.96,196.25 595.96,196.25 596.35,196.25C596.74,196.25 596.74,196.25 597.12,196.25C597.51,196.25 597.51,196.25 597.90,196.25C598.29,196.25 598.29,192.45 598.68,192.45C599.07,192.45 599.07,196.25 599.46,196.25C599.85,196.25 599.85,188.12 600.23,188.12C600.62,188.12 600.62,196.25 601.01,196.25C601.40,196.25 601.40,196.25 601.79,196.25C602.18,196.25 602.18,196.25 602.57,196.25C602.96,196.25 602.96,196.25 603.34,196.25C603.73,196.25 603.73,192.20 604.12,192.20C604.51,192.20 604.51,193.06 604.90,193.06C605.29,193.06 605.29,196.25 605.68,196.25C606.07,196.25 606.07,192.45 606.45,192.45C606.84,192.45 606.84,192.87 607.23,192.87C607.62,192.87 607.62,188.90 608.01,188.90C608.40,188.90 608.40,196.25 608.79,196.25C609.18,196.25 609.18,196.25 609.56,196.25C609.95,196.25 609.95,190.40 610.34,190.40C610.73,190.40 610.73,185.00 611.12,185.00C611.51,185.00 611.51,196.25 611.90,196.25C612.29,196.25 612.29,196.25 612.67,196.25C613.06,196.25 613.06,196.25 613.45,196.25C613.84,196.25 613.84,196.25 614.23,196.25C614.62,196.25 614.62,196.25 615.01,196.25C615.40,196.25 615.40,196.25 615.78,196.25C616.17,196.25 616.17,196.25 616.56,196.25C616.95,196.25 616.95,196.25 617.34,196.25C617.73,196.25 617.73,196.25 618.12,196.25C618.51,196.25 618.51,196.25 618.89,196.25C619.28,196.25 619.28,196.25 619.67,196.25C620.06,196.25 620.06,196.25 620.45,196.25" fill="none" stroke="#3b9bd6" stroke-width="1.3"/><path d="M971.90,181.25C972.29,181.25 972.29,196.25 972.68,196.25C973.07,196.25 973.07,196.25 973.46,196.25C973.84,196.25 973.84,196.25 974.23,196.25C974.62,196.25 974.62,181.25 975.01,181.25C975.40,181.25 975.40,196.25 975.79,196.25C976.18,196.25 976.18,196.25 976.57,196.25C976.95,196.25 976.95,196.25 977.34,196.25C977.73,196.25 977.73,196.25 978.12,196.25C978.51,196.25 978.51,196.25 978.90,196.25C979.29,196.25 979.29,196.25 979.68,196.25C980.06,196.25 980.06,196.25 980.45,196.25C980.84,196.25 980.84,196.25 981.23,196.25C981.62,196.25 981.62,196.25 982.01,196.25C982.40,196.25 982.40,196.25 982.79,196.25C983.17,196.25 983.17,196.25 983.56,196.25C983.95,196.25 983.95,196.25 984.34,196.25C984.73,196.25 984.73,188.75 985.12,188.75C985.51,188.75 985.51,196.25 985.90,196.25C986.28,196.25 986.28,196.25 986.67,196.25C987.06,196.25 987.06,196.25 987.45,196.25C987.84,196.25 987.84,196.25 988.23,196.25C988.62,196.25 988.62,196.25 989.01,196.25C989.39,196.25 989.39,196.25 989.78,196.25C990.17,196.25 990.17,196.25 990.56,196.25C990.95,196.25 990.95,196.25 991.34,196.25C991.73,196.25 991.73,196.25 992.12,196.25C992.50,196.25 992.50,196.25 992.89,196.25C993.28,196.25 993.28,196.25 993.67,196.25C994.06,196.25 994.06,196.25 994.45,196.25C994.84,196.25 994.84,181.25 995.23,181.25C995.61,181.25 995.61,196.25 996.00,196.25C996.39,196.25 996.39,196.25 996.78,196.25C997.17,196.25 997.17,181.25 997.56,181.25C997.95,181.25 997.95,196.25 998.34,196.25C998.72,196.25 998.72,196.25 999.11,196.25C999.50,196.25 999.50,196.25 999.89,196.25C1000.28,196.25 1000.28,196.25 1000.67,196.25C1001.06,196.25 1001.06,188.75 1001.45,188.75C1001.83,188.75 1001.83,196.25 1002.22,196.25C1002.61,196.25 1002.61,196.25 1003.00,196.25C1003.39,196.25 1003.39,196.25 1003.78,196.25C1004.17,196.25 1004.17,181.25 1004.56,181.25C1004.94,181.25 1004.94,196.25 1005.33,196.25C1005.72,196.25 1005.72,196.25 1006.11,196.25C1006.50,196.25 1006.50,196.25 1006.89,196.25C1007.28,196.25 1007.28,196.25 1007.67,196.25C1008.06,196.25 1008.06,196.25 1008.44,196.25C1008.83,196.25 1008.83,188.75 1009.22,188.75C1009.61,188.75 1009.61,196.25 1010.00,196.25C1010.39,196.25 1010.39,196.25 1010.78,196.25C1011.17,196.25 1011.17,196.25 1011.55,196.25C1011.94,196.25 1011.94,196.25 1012.33,196.25C1012.72,196.25 1012.72,196.25 1013.11,196.25C1013.50,196.25 1013.50,196.25 1013.89,196.25C1014.28,196.25 1014.28,188.75 1014.66,188.75C1015.05,188.75 1015.05,196.25 1015.44,196.25C1015.83,196.25 1015.83,196.25 1016.22,196.25C1016.61,196.25 1016.61,196.25 1017.00,196.25C1017.39,196.25 1017.39,196.25 1017.77,196.25C1018.16,196.25 1018.16,181.25 1018.55,181.25C1018.94,181.25 1018.94,196.25 1019.33,196.25C1019.72,196.25 1019.72,196.25 1020.11,196.25C1020.50,196.25 1020.50,196.25 1020.88,196.25C1021.27,196.25 1021.27,196.25 1021.66,196.25C1022.05,196.25 1022.05,196.25 1022.44,196.25C1022.83,196.25 1022.83,196.25 1023.22,196.25C1023.61,196.25 1023.61,196.25 1023.99,196.25C1024.38,196.25 1024.38,181.25 1024.77,181.25C1025.16,181.25 1025.16,196.25 1025.55,196.25C1025.94,196.25 1025.94,181.25 1026.33,181.25C1026.72,181.25 1026.72,196.25 1027.10,196.25C1027.49,196.25 1027.49,196.25 1027.88,196.25C1028.27,196.25 1028.27,196.25 1028.66,196.25C1029.05,196.25 1029.05,196.25 1029.44,196.25C1029.83,196.25 1029.83,196.25 1030.21,196.25C1030.60,196.25 1030.60,188.75 1030.99,188.75C1031.38,188.75 1031.38,196.25 1031.77,196.25C1032.16,196.25 1032.16,196.25 1032.55,196.25C1032.94,196.25 1032.94,196.25 1033.32,196.25C1033.71,196.25 1033.71,196.25 1034.10,196.25C1034.49,196.25 1034.49,196.25 1034.88,196.25C1035.27,196.25 1035.27,196.25 1035.66,196.25C1036.05,196.25 1036.05,196.25 1036.43,196.25C1036.82,196.25 1036.82,196.25 1037.21,196.25C1037.60,196.25 1037.60,196.25 1037.99,196.25C1038.38,196.25 1038.38,196.25 1038.77,196.25C1039.16,196.25 1039.16,196.25 1039.54,196.25C1039.93,196.25 1039.93,196.25 1040.32,196.25C1040.71,196.25 1040.71,196.25 1041.10,196.25 L1041.10,196.25 L971.90,196.25 Z" fill="#3b9bd6" fill-opacity="0.12"/><path d="M971.90,181.25C972.29,181.25 972.29,196.25 972.68,196.25C973.07,196.25 973.07,196.25 973.46,196.25C973.84,196.25 973.84,196.25 974.23,196.25C974.62,196.25 974.62,181.25 975.01,181.25C975.40,181.25 975.40,196.25 975.79,196.25C976.18,196.25 976.18,196.25 976.57,196.25C976.95,196.25 976.95,196.25 977.34,196.25C977.73,196.25 977.73,196.25 978.12,196.25C978.51,196.25 978.51,196.25 978.90,196.25C979.29,196.25 979.29,196.25 979.68,196.25C980.06,196.25 980.06,196.25 980.45,196.25C980.84,196.25 980.84,196.25 981.23,196.25C981.62,196.25 981.62,196.25 982.01,196.25C982.40,196.25 982.40,196.25 982.79,196.25C983.17,196.25 983.17,196.25 983.56,196.25C983.95,196.25 983.95,196.25 984.34,196.25C984.73,196.25 984.73,188.75 985.12,188.75C985.51,188.75 985.51,196.25 985.90,196.25C986.28,196.25 986.28,196.25 986.67,196.25C987.06,196.25 987.06,196.25 987.45,196.25C987.84,196.25 987.84,196.25 988.23,196.25C988.62,196.25 988.62,196.25 989.01,196.25C989.39,196.25 989.39,196.25 989.78,196.25C990.17,196.25 990.17,196.25 990.56,196.25C990.95,196.25 990.95,196.25 991.34,196.25C991.73,196.25 991.73,196.25 992.12,196.25C992.50,196.25 992.50,196.25 992.89,196.25C993.28,196.25 993.28,196.25 993.67,196.25C994.06,196.25 994.06,196.25 994.45,196.25C994.84,196.25 994.84,181.25 995.23,181.25C995.61,181.25 995.61,196.25 996.00,196.25C996.39,196.25 996.39,196.25 996.78,196.25C997.17,196.25 997.17,181.25 997.56,181.25C997.95,181.25 997.95,196.25 998.34,196.25C998.72,196.25 998.72,196.25 999.11,196.25C999.50,196.25 999.50,196.25 999.89,196.25C1000.28,196.25 1000.28,196.25 1000.67,196.25C1001.06,196.25 1001.06,188.75 1001.45,188.75C1001.83,188.75 1001.83,196.25 1002.22,196.25C1002.61,196.25 1002.61,196.25 1003.00,196.25C1003.39,196.25 1003.39,196.25 1003.78,196.25C1004.17,196.25 1004.17,181.25 1004.56,181.25C1004.94,181.25 1004.94,196.25 1005.33,196.25C1005.72,196.25 1005.72,196.25 1006.11,196.25C1006.50,196.25 1006.50,196.25 1006.89,196.25C1007.28,196.25 1007.28,196.25 1007.67,196.25C1008.06,196.25 1008.06,196.25 1008.44,196.25C1008.83,196.25 1008.83,188.75 1009.22,188.75C1009.61,188.75 1009.61,196.25 1010.00,196.25C1010.39,196.25 1010.39,196.25 1010.78,196.25C1011.17,196.25 1011.17,196.25 1011.55,196.25C1011.94,196.25 1011.94,196.25 1012.33,196.25C1012.72,196.25 1012.72,196.25 1013.11,196.25C1013.50,196.25 1013.50,196.25 1013.89,196.25C1014.28,196.25 1014.28,188.75 1014.66,188.75C1015.05,188.75 1015.05,196.25 1015.44,196.25C1015.83,196.25 1015.83,196.25 1016.22,196.25C1016.61,196.25 1016.61,196.25 1017.00,196.25C1017.39,196.25 1017.39,196.25 1017.77,196.25C1018.16,196.25 1018.16,181.25 1018.55,181.25C1018.94,181.25 1018.94,196.25 1019.33,196.25C1019.72,196.25 1019.72,196.25 1020.11,196.25C1020.50,196.25 1020.50,196.25 1020.88,196.25C1021.27,196.25 1021.27,196.25 1021.66,196.25C1022.05,196.25 1022.05,196.25 1022.44,196.25C1022.83,196.25 1022.83,196.25 1023.22,196.25C1023.61,196.25 1023.61,196.25 1023.99,196.25C1024.38,196.25 1024.38,181.25 1024.77,181.25C1025.16,181.25 1025.16,196.25 1025.55,196.25C1025.94,196.25 1025.94,181.25 1026.33,181.25C1026.72,181.25 1026.72,196.25 1027.10,196.25C1027.49,196.25 1027.49,196.25 1027.88,196.25C1028.27,196.25 1028.27,196.25 1028.66,196.25C1029.05,196.25 1029.05,196.25 1029.44,196.25C1029.83,196.25 1029.83,196.25 1030.21,196.25C1030.60,196.25 1030.60,188.75 1030.99,188.75C1031.38,188.75 1031.38,196.25 1031.77,196.25C1032.16,196.25 1032.16,196.25 1032.55,196.25C1032.94,196.25 1032.94,196.25 1033.32,196.25C1033.71,196.25 1033.71,196.25 1034.10,196.25C1034.49,196.25 1034.49,196.25 1034.88,196.25C1035.27,196.25 1035.27,196.25 1035.66,196.25C1036.05,196.25 1036.05,196.25 1036.43,196.25C1036.82,196.25 1036.82,196.25 1037.21,196.25C1037.60,196.25 1037.60,196.25 1037.99,196.25C1038.38,196.25 1038.38,196.25 1038.77,196.25C1039.16,196.25 1039.16,196.25 1039.54,196.25C1039.93,196.25 1039.93,196.25 1040.32,196.25C1040.71,196.25 1040.71,196.25 1041.10,196.25" fill="none" stroke="#3b9bd6" stroke-width="1.3"/><path d="M1391.25,191.00C1391.64,191.00 1391.64,196.25 1392.03,196.25C1392.42,196.25 1392.42,196.25 1392.81,196.25C1393.19,196.25 1393.19,196.25 1393.58,196.25C1393.97,196.25 1393.97,191.00 1394.36,191.00C1394.75,191.00 1394.75,196.25 1395.14,196.25C1395.53,196.25 1395.53,191.00 1395.92,191.00C1396.30,191.00 1396.30,191.00 1396.69,191.00C1397.08,191.00 1397.08,185.75 1397.47,185.75C1397.86,185.75 1397.86,196.25 1398.25,196.25C1398.64,196.25 1398.64,196.25 1399.03,196.25C1399.41,196.25 1399.41,196.25 1399.80,196.25C1400.19,196.25 1400.19,196.25 1400.58,196.25C1400.97,196.25 1400.97,191.00 1401.36,191.00C1401.75,191.00 1401.75,196.25 1402.14,196.25C1402.52,196.25 1402.52,191.00 1402.91,191.00C1403.30,191.00 1403.30,196.25 1403.69,196.25C1404.08,196.25 1404.08,185.75 1404.47,185.75C1404.86,185.75 1404.86,196.25 1405.25,196.25C1405.63,196.25 1405.63,196.25 1406.02,196.25C1406.41,196.25 1406.41,196.25 1406.80,196.25C1407.19,196.25 1407.19,196.25 1407.58,196.25C1407.97,196.25 1407.97,196.25 1408.36,196.25C1408.74,196.25 1408.74,196.25 1409.13,196.25C1409.52,196.25 1409.52,196.25 1409.91,196.25C1410.30,196.25 1410.30,196.25 1410.69,196.25C1411.08,196.25 1411.08,191.00 1411.47,191.00C1411.85,191.00 1411.85,196.25 1412.24,196.25C1412.63,196.25 1412.63,191.00 1413.02,191.00C1413.41,191.00 1413.41,196.25 1413.80,196.25C1414.19,196.25 1414.19,191.00 1414.58,191.00C1414.96,191.00 1414.96,196.25 1415.35,196.25C1415.74,196.25 1415.74,191.00 1416.13,191.00C1416.52,191.00 1416.52,191.00 1416.91,191.00C1417.30,191.00 1417.30,191.00 1417.69,191.00C1418.07,191.00 1418.07,196.25 1418.46,196.25C1418.85,196.25 1418.85,196.25 1419.24,196.25C1419.63,196.25 1419.63,196.25 1420.02,196.25C1420.41,196.25 1420.41,196.25 1420.80,196.25C1421.18,196.25 1421.18,185.75 1421.57,185.75C1421.96,185.75 1421.96,191.00 1422.35,191.00C1422.74,191.00 1422.74,196.25 1423.13,196.25C1423.52,196.25 1423.52,196.25 1423.91,196.25C1424.29,196.25 1424.29,191.00 1424.68,191.00C1425.07,191.00 1425.07,196.25 1425.46,196.25C1425.85,196.25 1425.85,196.25 1426.24,196.25C1426.63,196.25 1426.63,196.25 1427.02,196.25C1427.41,196.25 1427.41,196.25 1427.79,196.25C1428.18,196.25 1428.18,196.25 1428.57,196.25C1428.96,196.25 1428.96,185.75 1429.35,185.75C1429.74,185.75 1429.74,196.25 1430.13,196.25C1430.52,196.25 1430.52,196.25 1430.90,196.25C1431.29,196.25 1431.29,191.00 1431.68,191.00C1432.07,191.00 1432.07,196.25 1432.46,196.25C1432.85,196.25 1432.85,196.25 1433.24,196.25C1433.63,196.25 1433.63,196.25 1434.01,196.25C1434.40,196.25 1434.40,191.00 1434.79,191.00C1435.18,191.00 1435.18,196.25 1435.57,196.25C1435.96,196.25 1435.96,196.25 1436.35,196.25C1436.74,196.25 1436.74,196.25 1437.12,196.25C1437.51,196.25 1437.51,196.25 1437.90,196.25C1438.29,196.25 1438.29,191.00 1438.68,191.00C1439.07,191.00 1439.07,196.25 1439.46,196.25C1439.85,196.25 1439.85,185.75 1440.23,185.75C1440.62,185.75 1440.62,196.25 1441.01,196.25C1441.40,196.25 1441.40,196.25 1441.79,196.25C1442.18,196.25 1442.18,196.25 1442.57,196.25C1442.96,196.25 1442.96,196.25 1443.34,196.25C1443.73,196.25 1443.73,191.00 1444.12,191.00C1444.51,191.00 1444.51,191.00 1444.90,191.00C1445.29,191.00 1445.29,196.25 1445.68,196.25C1446.07,196.25 1446.07,191.00 1446.45,191.00C1446.84,191.00 1446.84,191.00 1447.23,191.00C1447.62,191.00 1447.62,191.00 1448.01,191.00C1448.40,191.00 1448.40,196.25 1448.79,196.25C1449.18,196.25 1449.18,196.25 1449.56,196.25C1449.95,196.25 1449.95,191.00 1450.34,191.00C1450.73,191.00 1450.73,185.75 1451.12,185.75C1451.51,185.75 1451.51,196.25 1451.90,196.25C1452.29,196.25 1452.29,196.25 1452.67,196.25C1453.06,196.25 1453.06,196.25 1453.45,196.25C1453.84,196.25 1453.84,196.25 1454.23,196.25C1454.62,196.25 1454.62,196.25 1455.01,196.25C1455.40,196.25 1455.40,196.25 1455.78,196.25C1456.17,196.25 1456.17,196.25 1456.56,196.25C1456.95,196.25 1456.95,196.25 1457.34,196.25C1457.73,196.25 1457.73,196.25 1458.12,196.25C1458.51,196.25 1458.51,196.25 1458.89,196.25C1459.28,196.25 1459.28,196.25 1459.67,196.25C1460.06,196.25 1460.06,196.25 1460.45,196.25 L1460.45,196.25 L1391.25,196.25 Z" fill="#3b9bd6" fill-opacity="0.12"/><path d="M1391.25,191.00C1391.64,191.00 1391.64,196.25 1392.03,196.25C1392.42,196.25 1392.42,196.25 1392.81,196.25C1393.19,196.25 1393.19,196.25 1393.58,196.25C1393.97,196.25 1393.97,191.00 1394.36,191.00C1394.75,191.00 1394.75,196.25 1395.14,196.25C1395.53,196.25 1395.53,191.00 1395.92,191.00C1396.30,191.00 1396.30,191.00 1396.69,191.00C1397.08,191.00 1397.08,185.75 1397.47,185.75C1397.86,185.75 1397.86,196.25 1398.25,196.25C1398.64,196.25 1398.64,196.25 1399.03,196.25C1399.41,196.25 1399.41,196.25 1399.80,196.25C1400.19,196.25 1400.19,196.25 1400.58,196.25C1400.97,196.25 1400.97,191.00 1401.36,191.00C1401.75,191.00 1401.75,196.25 1402.14,196.25C1402.52,196.25 1402.52,191.00 1402.91,191.00C1403.30,191.00 1403.30,196.25 1403.69,196.25C1404.08,196.25 1404.08,185.75 1404.47,185.75C1404.86,185.75 1404.86,196.25 1405.25,196.25C1405.63,196.25 1405.63,196.25 1406.02,196.25C1406.41,196.25 1406.41,196.25 1406.80,196.25C1407.19,196.25 1407.19,196.25 1407.58,196.25C1407.97,196.25 1407.97,196.25 1408.36,196.25C1408.74,196.25 1408.74,196.25 1409.13,196.25C1409.52,196.25 1409.52,196.25 1409.91,196.25C1410.30,196.25 1410.30,196.25 1410.69,196.25C1411.08,196.25 1411.08,191.00 1411.47,191.00C1411.85,191.00 1411.85,196.25 1412.24,196.25C1412.63,196.25 1412.63,191.00 1413.02,191.00C1413.41,191.00 1413.41,196.25 1413.80,196.25C1414.19,196.25 1414.19,191.00 1414.58,191.00C1414.96,191.00 1414.96,196.25 1415.35,196.25C1415.74,196.25 1415.74,191.00 1416.13,191.00C1416.52,191.00 1416.52,191.00 1416.91,191.00C1417.30,191.00 1417.30,191.00 1417.69,191.00C1418.07,191.00 1418.07,196.25 1418.46,196.25C1418.85,196.25 1418.85,196.25 1419.24,196.25C1419.63,196.25 1419.63,196.25 1420.02,196.25C1420.41,196.25 1420.41,196.25 1420.80,196.25C1421.18,196.25 1421.18,185.75 1421.57,185.75C1421.96,185.75 1421.96,191.00 1422.35,191.00C1422.74,191.00 1422.74,196.25 1423.13,196.25C1423.52,196.25 1423.52,196.25 1423.91,196.25C1424.29,196.25 1424.29,191.00 1424.68,191.00C1425.07,191.00 1425.07,196.25 1425.46,196.25C1425.85,196.25 1425.85,196.25 1426.24,196.25C1426.63,196.25 1426.63,196.25 1427.02,196.25C1427.41,196.25 1427.41,196.25 1427.79,196.25C1428.18,196.25 1428.18,196.25 1428.57,196.25C1428.96,196.25 1428.96,185.75 1429.35,185.75C1429.74,185.75 1429.74,196.25 1430.13,196.25C1430.52,196.25 1430.52,196.25 1430.90,196.25C1431.29,196.25 1431.29,191.00 1431.68,191.00C1432.07,191.00 1432.07,196.25 1432.46,196.25C1432.85,196.25 1432.85,196.25 1433.24,196.25C1433.63,196.25 1433.63,196.25 1434.01,196.25C1434.40,196.25 1434.40,191.00 1434.79,191.00C1435.18,191.00 1435.18,196.25 1435.57,196.25C1435.96,196.25 1435.96,196.25 1436.35,196.25C1436.74,196.25 1436.74,196.25 1437.12,196.25C1437.51,196.25 1437.51,196.25 1437.90,196.25C1438.29,196.25 1438.29,191.00 1438.68,191.00C1439.07,191.00 1439.07,196.25 1439.46,196.25C1439.85,196.25 1439.85,185.75 1440.23,185.75C1440.62,185.75 1440.62,196.25 1441.01,196.25C1441.40,196.25 1441.40,196.25 1441.79,196.25C1442.18,196.25 1442.18,196.25 1442.57,196.25C1442.96,196.25 1442.96,196.25 1443.34,196.25C1443.73,196.25 1443.73,191.00 1444.12,191.00C1444.51,191.00 1444.51,191.00 1444.90,191.00C1445.29,191.00 1445.29,196.25 1445.68,196.25C1446.07,196.25 1446.07,191.00 1446.45,191.00C1446.84,191.00 1446.84,191.00 1447.23,191.00C1447.62,191.00 1447.62,191.00 1448.01,191.00C1448.40,191.00 1448.40,196.25 1448.79,196.25C1449.18,196.25 1449.18,196.25 1449.56,196.25C1449.95,196.25 1449.95,191.00 1450.34,191.00C1450.73,191.00 1450.73,185.75 1451.12,185.75C1451.51,185.75 1451.51,196.25 1451.90,196.25C1452.29,196.25 1452.29,196.25 1452.67,196.25C1453.06,196.25 1453.06,196.25 1453.45,196.25C1453.84,196.25 1453.84,196.25 1454.23,196.25C1454.62,196.25 1454.62,196.25 1455.01,196.25C1455.40,196.25 1455.40,196.25 1455.78,196.25C1456.17,196.25 1456.17,196.25 1456.56,196.25C1456.95,196.25 1456.95,196.25 1457.34,196.25C1457.73,196.25 1457.73,196.25 1458.12,196.25C1458.51,196.25 1458.51,196.25 1458.89,196.25C1459.28,196.25 1459.28,196.25 1459.67,196.25C1460.06,196.25 1460.06,196.25 1460.45,196.25" fill="none" stroke="#3b9bd6" stroke-width="1.3"/><path d="M1811.25,191.00C1811.64,191.00 1811.64,196.25 1812.03,196.25C1812.42,196.25 1812.42,196.25 1812.81,196.25C1813.19,196.25 1813.19,196.25 1813.58,196.25C1813.97,196.25 1813.97,191.00 1814.36,191.00C1814.75,191.00 1814.75,196.25 1815.14,196.25C1815.53,196.25 1815.53,191.00 1815.92,191.00C1816.30,191.00 1816.30,191.00 1816.69,191.00C1817.08,191.00 1817.08,185.75 1817.47,185.75C1817.86,185.75 1817.86,196.25 1818.25,196.25C1818.64,196.25 1818.64,196.25 1819.03,196.25C1819.41,196.25 1819.41,196.25 1819.80,196.25C1820.19,196.25 1820.19,196.25 1820.58,196.25C1820.97,196.25 1820.97,191.00 1821.36,191.00C1821.75,191.00 1821.75,196.25 1822.14,196.25C1822.52,196.25 1822.52,191.00 1822.91,191.00C1823.30,191.00 1823.30,196.25 1823.69,196.25C1824.08,196.25 1824.08,185.75 1824.47,185.75C1824.86,185.75 1824.86,196.25 1825.25,196.25C1825.63,196.25 1825.63,196.25 1826.02,196.25C1826.41,196.25 1826.41,196.25 1826.80,196.25C1827.19,196.25 1827.19,196.25 1827.58,196.25C1827.97,196.25 1827.97,196.25 1828.36,196.25C1828.74,196.25 1828.74,196.25 1829.13,196.25C1829.52,196.25 1829.52,196.25 1829.91,196.25C1830.30,196.25 1830.30,196.25 1830.69,196.25C1831.08,196.25 1831.08,191.00 1831.47,191.00C1831.85,191.00 1831.85,196.25 1832.24,196.25C1832.63,196.25 1832.63,191.00 1833.02,191.00C1833.41,191.00 1833.41,196.25 1833.80,196.25C1834.19,196.25 1834.19,191.00 1834.58,191.00C1834.96,191.00 1834.96,196.25 1835.35,196.25C1835.74,196.25 1835.74,191.00 1836.13,191.00C1836.52,191.00 1836.52,191.00 1836.91,191.00C1837.30,191.00 1837.30,191.00 1837.69,191.00C1838.07,191.00 1838.07,196.25 1838.46,196.25C1838.85,196.25 1838.85,196.25 1839.24,196.25C1839.63,196.25 1839.63,196.25 1840.02,196.25C1840.41,196.25 1840.41,196.25 1840.80,196.25C1841.18,196.25 1841.18,185.75 1841.57,185.75C1841.96,185.75 1841.96,191.00 1842.35,191.00C1842.74,191.00 1842.74,196.25 1843.13,196.25C1843.52,196.25 1843.52,196.25 1843.91,196.25C1844.29,196.25 1844.29,191.00 1844.68,191.00C1845.07,191.00 1845.07,196.25 1845.46,196.25C1845.85,196.25 1845.85,196.25 1846.24,196.25C1846.63,196.25 1846.63,196.25 1847.02,196.25C1847.41,196.25 1847.41,196.25 1847.79,196.25C1848.18,196.25 1848.18,196.25 1848.57,196.25C1848.96,196.25 1848.96,185.75 1849.35,185.75C1849.74,185.75 1849.74,196.25 1850.13,196.25C1850.52,196.25 1850.52,196.25 1850.90,196.25C1851.29,196.25 1851.29,191.00 1851.68,191.00C1852.07,191.00 1852.07,196.25 1852.46,196.25C1852.85,196.25 1852.85,196.25 1853.24,196.25C1853.63,196.25 1853.63,196.25 1854.01,196.25C1854.40,196.25 1854.40,191.00 1854.79,191.00C1855.18,191.00 1855.18,196.25 1855.57,196.25C1855.96,196.25 1855.96,196.25 1856.35,196.25C1856.74,196.25 1856.74,196.25 1857.12,196.25C1857.51,196.25 1857.51,196.25 1857.90,196.25C1858.29,196.25 1858.29,191.00 1858.68,191.00C1859.07,191.00 1859.07,196.25 1859.46,196.25C1859.85,196.25 1859.85,185.75 1860.23,185.75C1860.62,185.75 1860.62,196.25 1861.01,196.25C1861.40,196.25 1861.40,196.25 1861.79,196.25C1862.18,196.25 1862.18,196.25 1862.57,196.25C1862.96,196.25 1862.96,196.25 1863.34,196.25C1863.73,196.25 1863.73,191.00 1864.12,191.00C1864.51,191.00 1864.51,191.00 1864.90,191.00C1865.29,191.00 1865.29,196.25 1865.68,196.25C1866.07,196.25 1866.07,191.00 1866.45,191.00C1866.84,191.00 1866.84,191.00 1867.23,191.00C1867.62,191.00 1867.62,191.00 1868.01,191.00C1868.40,191.00 1868.40,196.25 1868.79,196.25C1869.18,196.25 1869.18,196.25 1869.56,196.25C1869.95,196.25 1869.95,191.00 1870.34,191.00C1870.73,191.00 1870.73,185.75 1871.12,185.75C1871.51,185.75 1871.51,196.25 1871.90,196.25C1872.29,196.25 1872.29,196.25 1872.67,196.25C1873.06,196.25 1873.06,196.25 1873.45,196.25C1873.84,196.25 1873.84,196.25 1874.23,196.25C1874.62,196.25 1874.62,196.25 1875.01,196.25C1875.40,196.25 1875.40,196.25 1875.78,196.25C1876.17,196.25 1876.17,196.25 1876.56,196.25C1876.95,196.25 1876.95,196.25 1877.34,196.25C1877.73,196.25 1877.73,196.25 1878.12,196.25C1878.51,196.25 1878.51,196.25 1878.89,196.25C1879.28,196.25 1879.28,196.25 1879.67,196.25C1880.06,196.25 1880.06,196.25 1880.45,196.25 L1880.45,196.25 L1811.25,196.25 Z" fill="#3b9bd6" fill-opacity="0.12"/><path d="M1811.25,191.00C1811.64,191.00 1811.64,196.25 1812.03,196.25C1812.42,196.25 1812.42,196.25 1812.81,196.25C1813.19,196.25 1813.19,196.25 1813.58,196.25C1813.97,196.25 1813.97,191.00 1814.36,191.00C1814.75,191.00 1814.75,196.25 1815.14,196.25C1815.53,196.25 1815.53,191.00 1815.92,191.00C1816.30,191.00 1816.30,191.00 1816.69,191.00C1817.08,191.00 1817.08,185.75 1817.47,185.75C1817.86,185.75 1817.86,196.25 1818.25,196.25C1818.64,196.25 1818.64,196.25 1819.03,196.25C1819.41,196.25 1819.41,196.25 1819.80,196.25C1820.19,196.25 1820.19,196.25 1820.58,196.25C1820.97,196.25 1820.97,191.00 1821.36,191.00C1821.75,191.00 1821.75,196.25 1822.14,196.25C1822.52,196.25 1822.52,191.00 1822.91,191.00C1823.30,191.00 1823.30,196.25 1823.69,196.25C1824.08,196.25 1824.08,185.75 1824.47,185.75C1824.86,185.75 1824.86,196.25 1825.25,196.25C1825.63,196.25 1825.63,196.25 1826.02,196.25C1826.41,196.25 1826.41,196.25 1826.80,196.25C1827.19,196.25 1827.19,196.25 1827.58,196.25C1827.97,196.25 1827.97,196.25 1828.36,196.25C1828.74,196.25 1828.74,196.25 1829.13,196.25C1829.52,196.25 1829.52,196.25 1829.91,196.25C1830.30,196.25 1830.30,196.25 1830.69,196.25C1831.08,196.25 1831.08,191.00 1831.47,191.00C1831.85,191.00 1831.85,196.25 1832.24,196.25C1832.63,196.25 1832.63,191.00 1833.02,191.00C1833.41,191.00 1833.41,196.25 1833.80,196.25C1834.19,196.25 1834.19,191.00 1834.58,191.00C1834.96,191.00 1834.96,196.25 1835.35,196.25C1835.74,196.25 1835.74,191.00 1836.13,191.00C1836.52,191.00 1836.52,191.00 1836.91,191.00C1837.30,191.00 1837.30,191.00 1837.69,191.00C1838.07,191.00 1838.07,196.25 1838.46,196.25C1838.85,196.25 1838.85,196.25 1839.24,196.25C1839.63,196.25 1839.63,196.25 1840.02,196.25C1840.41,196.25 1840.41,196.25 1840.80,196.25C1841.18,196.25 1841.18,185.75 1841.57,185.75C1841.96,185.75 1841.96,191.00 1842.35,191.00C1842.74,191.00 1842.74,196.25 1843.13,196.25C1843.52,196.25 1843.52,196.25 1843.91,196.25C1844.29,196.25 1844.29,191.00 1844.68,191.00C1845.07,191.00 1845.07,196.25 1845.46,196.25C1845.85,196.25 1845.85,196.25 1846.24,196.25C1846.63,196.25 1846.63,196.25 1847.02,196.25C1847.41,196.25 1847.41,196.25 1847.79,196.25C1848.18,196.25 1848.18,196.25 1848.57,196.25C1848.96,196.25 1848.96,185.75 1849.35,185.75C1849.74,185.75 1849.74,196.25 1850.13,196.25C1850.52,196.25 1850.52,196.25 1850.90,196.25C1851.29,196.25 1851.29,191.00 1851.68,191.00C1852.07,191.00 1852.07,196.25 1852.46,196.25C1852.85,196.25 1852.85,196.25 1853.24,196.25C1853.63,196.25 1853.63,196.25 1854.01,196.25C1854.40,196.25 1854.40,191.00 1854.79,191.00C1855.18,191.00 1855.18,196.25 1855.57,196.25C1855.96,196.25 1855.96,196.25 1856.35,196.25C1856.74,196.25 1856.74,196.25 1857.12,196.25C1857.51,196.25 1857.51,196.25 1857.90,196.25C1858.29,196.25 1858.29,191.00 1858.68,191.00C1859.07,191.00 1859.07,196.25 1859.46,196.25C1859.85,196.25 1859.85,185.75 1860.23,185.75C1860.62,185.75 1860.62,196.25 1861.01,196.25C1861.40,196.25 1861.40,196.25 1861.79,196.25C1862.18,196.25 1862.18,196.25 1862.57,196.25C1862.96,196.25 1862.96,196.25 1863.34,196.25C1863.73,196.25 1863.73,191.00 1864.12,191.00C1864.51,191.00 1864.51,191.00 1864.90,191.00C1865.29,191.00 1865.29,196.25 1865.68,196.25C1866.07,196.25 1866.07,191.00 1866.45,191.00C1866.84,191.00 1866.84,191.00 1867.23,191.00C1867.62,191.00 1867.62,191.00 1868.01,191.00C1868.40,191.00 1868.40,196.25 1868.79,196.25C1869.18,196.25 1869.18,196.25 1869.56,196.25C1869.95,196.25 1869.95,191.00 1870.34,191.00C1870.73,191.00 1870.73,185.75 1871.12,185.75C1871.51,185.75 1871.51,196.25 1871.90,196.25C1872.29,196.25 1872.29,196.25 1872.67,196.25C1873.06,196.25 1873.06,196.25 1873.45,196.25C1873.84,196.25 1873.84,196.25 1874.23,196.25C1874.62,196.25 1874.62,196.25 1875.01,196.25C1875.40,196.25 1875.40,196.25 1875.78,196.25C1876.17,196.25 1876.17,196.25 1876.56,196.25C1876.95,196.25 1876.95,196.25 1877.34,196.25C1877.73,196.25 1877.73,196.25 1878.12,196.25C1878.51,196.25 1878.51,196.25 1878.89,196.25C1879.28,196.25 1879.28,196.25 1879.67,196.25C1880.06,196.25 1880.06,196.25 1880.45,196.25" fill="none" stroke="#3b9bd6" stroke-width="1.3"/><path d="M292.2,304.5 H1316" stroke="#ebebeb" stroke-width="1"/><path d="M292.2,352.5 H1316" stroke="#ebebeb" stroke-width="1"/><path d="M292.2,400.5 H1316" stroke="#ebebeb" stroke-width="1"/><path d="M292.2,448.5 H1316" stroke="#ebebeb" stroke-width="1"/><path d="M292.2,496.5 H1316" stroke="#ebebeb" stroke-width="1"/><path d="M292.20,496.50C297.95,496.50 297.95,458.48 303.70,458.48C309.45,458.48 309.45,496.50 315.20,496.50C320.95,496.50 320.95,496.50 326.70,496.50C332.45,496.50 332.45,496.50 338.20,496.50C343.95,496.50 343.95,496.50 349.70,496.50C355.45,496.50 355.45,496.50 361.20,496.50C366.95,496.50 366.95,496.50 372.70,496.50C378.45,496.50 378.45,496.50 384.20,496.50C389.95,496.50 389.95,496.50 395.70,496.50C401.45,496.50 401.45,496.50 407.20,496.50C412.95,496.50 412.95,433.14 418.70,433.14C424.45,433.14 424.45,431.22 430.20,431.22C435.95,431.22 435.95,496.50 441.70,496.50C447.45,496.50 447.45,381.30 453.20,381.30C458.95,381.30 458.95,323.70 464.70,323.70C470.45,323.70 470.45,460.02 476.20,460.02C481.95,460.02 481.95,402.42 487.70,402.42C493.45,402.42 493.45,496.50 499.20,496.50C504.95,496.50 504.95,453.01 510.70,453.01C516.45,453.01 516.45,446.58 522.20,446.58C527.95,446.58 527.95,496.50 533.70,496.50C539.45,496.50 539.45,496.50 545.20,496.50C550.95,496.50 550.95,496.50 556.70,496.50C562.45,496.50 562.45,455.22 568.20,455.22C573.95,455.22 573.95,496.50 579.70,496.50C585.45,496.50 585.45,496.50 591.20,496.50C596.95,496.50 596.95,496.50 602.70,496.50C608.45,496.50 608.45,462.90 614.20,462.90C619.95,462.90 619.95,496.50 625.70,496.50C631.45,496.50 631.45,496.50 637.20,496.50C642.95,496.50 642.95,457.14 648.70,457.14C654.45,457.14 654.45,496.50 660.20,496.50C665.95,496.50 665.95,496.50 671.70,496.50C677.45,496.50 677.45,428.72 683.20,428.72C688.95,428.72 688.95,496.50 694.70,496.50C700.45,496.50 700.45,496.50 706.20,496.50C711.95,496.50 711.95,496.50 717.70,496.50C723.45,496.50 723.45,437.94 729.20,437.94C734.95,437.94 734.95,496.50 740.70,496.50C746.45,496.50 746.45,445.62 752.20,445.62C757.95,445.62 757.95,496.50 763.70,496.50C769.45,496.50 769.45,496.50 775.20,496.50C780.95,496.50 780.95,496.50 786.70,496.50C792.45,496.50 792.45,496.50 798.20,496.50C803.95,496.50 803.95,496.50 809.70,496.50C815.45,496.50 815.45,371.89 821.20,371.89C826.95,371.89 826.95,448.50 832.70,448.50C838.45,448.50 838.45,435.06 844.20,435.06C849.95,435.06 849.95,432.18 855.70,432.18C861.45,432.18 861.45,456.18 867.20,456.18C872.95,456.18 872.95,496.50 878.70,496.50C884.45,496.50 884.45,388.98 890.20,388.98C895.95,388.98 895.95,456.18 901.70,456.18C907.45,456.18 907.45,496.50 913.20,496.50C918.95,496.50 918.95,496.50 924.70,496.50C930.45,496.50 930.45,496.50 936.20,496.50C941.95,496.50 941.95,496.50 947.70,496.50C953.45,496.50 953.45,496.50 959.20,496.50C964.95,496.50 964.95,496.50 970.70,496.50C976.45,496.50 976.45,452.34 982.20,452.34C987.95,452.34 987.95,496.50 993.70,496.50C999.45,496.50 999.45,496.50 1005.20,496.50C1010.95,496.50 1010.95,456.18 1016.70,456.18C1022.45,456.18 1022.45,496.50 1028.20,496.50C1033.95,496.50 1033.95,496.50 1039.70,496.50C1045.45,496.50 1045.45,496.50 1051.20,496.50C1056.95,496.50 1056.95,496.50 1062.70,496.50C1068.45,496.50 1068.45,460.02 1074.20,460.02C1079.95,460.02 1079.95,496.50 1085.70,496.50C1091.45,496.50 1091.45,496.50 1097.20,496.50C1102.95,496.50 1102.95,496.50 1108.70,496.50C1114.45,496.50 1114.45,496.50 1120.20,496.50C1125.95,496.50 1125.95,496.50 1131.70,496.50C1137.45,496.50 1137.45,413.65 1143.20,413.65C1148.95,413.65 1148.95,496.50 1154.70,496.50C1160.45,496.50 1160.45,496.50 1166.20,496.50C1171.95,496.50 1171.95,496.50 1177.70,496.50C1183.45,496.50 1183.45,496.50 1189.20,496.50C1194.95,496.50 1194.95,496.50 1200.70,496.50C1206.45,496.50 1206.45,421.04 1212.20,421.04C1217.95,421.04 1217.95,496.50 1223.70,496.50C1229.45,496.50 1229.45,496.50 1235.20,496.50C1240.95,496.50 1240.95,496.50 1246.70,496.50C1252.45,496.50 1252.45,496.50 1258.20,496.50C1263.95,496.50 1263.95,461.94 1269.70,461.94C1275.45,461.94 1275.45,496.50 1281.20,496.50C1286.95,496.50 1286.95,471.54 1292.70,471.54C1298.45,471.54 1298.45,496.50 1304.20,496.50C1309.95,496.50 1309.95,454.26 1315.70,454.26" fill="none" stroke="#8cb2ca" stroke-width="1.3" stroke-dasharray="1.2 2.5"/><path d="M292.20,427.57C297.95,427.57 297.95,496.50 303.70,496.50C309.45,496.50 309.45,496.50 315.20,496.50C320.95,496.50 320.95,496.50 326.70,496.50C332.45,496.50 332.45,444.18 338.20,444.18C343.95,444.18 343.95,496.50 349.70,496.50C355.45,496.50 355.45,447.54 361.20,447.54C366.95,447.54 366.95,461.94 372.70,461.94C378.45,461.94 378.45,379.38 384.20,379.38C389.95,379.38 389.95,496.50 395.70,496.50C401.45,496.50 401.45,496.50 407.20,496.50C412.95,496.50 412.95,496.50 418.70,496.50C424.45,496.50 424.45,496.50 430.20,496.50C435.95,496.50 435.95,445.91 441.70,445.91C447.45,445.91 447.45,496.50 453.20,496.50C458.95,496.50 458.95,440.44 464.70,440.44C470.45,440.44 470.45,496.50 476.20,496.50C481.95,496.50 481.95,361.72 487.70,361.72C493.45,361.72 493.45,496.50 499.20,496.50C504.95,496.50 504.95,496.50 510.70,496.50C516.45,496.50 516.45,496.50 522.20,496.50C527.95,496.50 527.95,496.50 533.70,496.50C539.45,496.50 539.45,496.50 545.20,496.50C550.95,496.50 550.95,496.50 556.70,496.50C562.45,496.50 562.45,496.50 568.20,496.50C573.95,496.50 573.95,496.50 579.70,496.50C585.45,496.50 585.45,407.70 591.20,407.70C596.95,407.70 596.95,496.50 602.70,496.50C608.45,496.50 608.45,454.64 614.20,454.64C619.95,454.64 619.95,496.50 625.70,496.50C631.45,496.50 631.45,440.82 637.20,440.82C642.95,440.82 642.95,496.50 648.70,496.50C654.45,496.50 654.45,438.61 660.20,438.61C665.95,438.61 665.95,437.94 671.70,437.94C677.45,437.94 677.45,400.50 683.20,400.50C688.95,400.50 688.95,496.50 694.70,496.50C700.45,496.50 700.45,496.50 706.20,496.50C711.95,496.50 711.95,496.50 717.70,496.50C723.45,496.50 723.45,496.50 729.20,496.50C734.95,496.50 734.95,390.52 740.70,390.52C746.45,390.52 746.45,434.10 752.20,434.10C757.95,434.10 757.95,496.50 763.70,496.50C769.45,496.50 769.45,496.50 775.20,496.50C780.95,496.50 780.95,448.50 786.70,448.50C792.45,448.50 792.45,496.50 798.20,496.50C803.95,496.50 803.95,496.50 809.70,496.50C815.45,496.50 815.45,496.50 821.20,496.50C826.95,496.50 826.95,496.50 832.70,496.50C838.45,496.50 838.45,496.50 844.20,496.50C849.95,496.50 849.95,378.42 855.70,378.42C861.45,378.42 861.45,496.50 867.20,496.50C872.95,496.50 872.95,496.50 878.70,496.50C884.45,496.50 884.45,441.30 890.20,441.30C895.95,441.30 895.95,496.50 901.70,496.50C907.45,496.50 907.45,496.50 913.20,496.50C918.95,496.50 918.95,496.50 924.70,496.50C930.45,496.50 930.45,409.52 936.20,409.52C941.95,409.52 941.95,496.50 947.70,496.50C953.45,496.50 953.45,496.50 959.20,496.50C964.95,496.50 964.95,496.50 970.70,496.50C976.45,496.50 976.45,496.50 982.20,496.50C987.95,496.50 987.95,448.50 993.70,448.50C999.45,448.50 999.45,496.50 1005.20,496.50C1010.95,496.50 1010.95,393.78 1016.70,393.78C1022.45,393.78 1022.45,496.50 1028.20,496.50C1033.95,496.50 1033.95,496.50 1039.70,496.50C1045.45,496.50 1045.45,496.50 1051.20,496.50C1056.95,496.50 1056.95,496.50 1062.70,496.50C1068.45,496.50 1068.45,445.33 1074.20,445.33C1079.95,445.33 1079.95,456.18 1085.70,456.18C1091.45,456.18 1091.45,496.50 1097.20,496.50C1102.95,496.50 1102.95,448.50 1108.70,448.50C1114.45,448.50 1114.45,453.78 1120.20,453.78C1125.95,453.78 1125.95,403.67 1131.70,403.67C1137.45,403.67 1137.45,496.50 1143.20,496.50C1148.95,496.50 1148.95,496.50 1154.70,496.50C1160.45,496.50 1160.45,422.58 1166.20,422.58C1171.95,422.58 1171.95,354.42 1177.70,354.42C1183.45,354.42 1183.45,496.50 1189.20,496.50C1194.95,496.50 1194.95,496.50 1200.70,496.50C1206.45,496.50 1206.45,496.50 1212.20,496.50C1217.95,496.50 1217.95,496.50 1223.70,496.50C1229.45,496.50 1229.45,496.50 1235.20,496.50C1240.95,496.50 1240.95,496.50 1246.70,496.50C1252.45,496.50 1252.45,496.50 1258.20,496.50C1263.95,496.50 1263.95,496.50 1269.70,496.50C1275.45,496.50 1275.45,496.50 1281.20,496.50C1286.95,496.50 1286.95,496.50 1292.70,496.50C1298.45,496.50 1298.45,496.50 1304.20,496.50C1309.95,496.50 1309.95,496.50 1315.70,496.50" fill="none" stroke="#3b97cf" stroke-width="2"/><path d="M649,550 H661" stroke="#3b97cf" stroke-width="2"/><path d="M772,550 H785" stroke="#8fbfdc" stroke-width="1.5" stroke-dasharray="1.5 2"/><circle cx="408.8" cy="715.5" r="70.7" fill="none" stroke="#38a8e9" stroke-width="16"/><path d="M852,669 H1317.5" stroke="#ebebeb" stroke-width="1"/><path d="M852,739.8 H1317.5" stroke="#f0f0f0" stroke-width="1"/><path d="M851.50,719.05C854.12,719.05 854.12,739.50 856.73,739.50C859.35,739.50 859.35,739.50 861.96,739.50C864.58,739.50 864.58,739.50 867.19,739.50C869.81,739.50 869.81,723.36 872.42,723.36C875.03,723.36 875.03,739.50 877.65,739.50C880.26,739.50 880.26,724.70 882.88,724.70C885.50,724.70 885.50,730.34 888.11,730.34C890.73,730.34 890.73,704.25 893.34,704.25C895.96,704.25 895.96,739.50 898.57,739.50C901.18,739.50 901.18,739.50 903.80,739.50C906.41,739.50 906.41,739.50 909.03,739.50C911.64,739.50 911.64,739.50 914.26,739.50C916.88,739.50 916.88,723.99 919.49,723.99C922.11,723.99 922.11,739.50 924.72,739.50C927.34,739.50 927.34,722.37 929.95,722.37C932.57,722.37 932.57,739.50 935.18,739.50C937.80,739.50 937.80,719.90 940.41,719.90C943.02,719.90 943.02,739.50 945.64,739.50C948.25,739.50 948.25,739.50 950.87,739.50C953.49,739.50 953.49,739.50 956.10,739.50C958.72,739.50 958.72,739.50 961.33,739.50C963.94,739.50 963.94,739.50 966.56,739.50C969.17,739.50 969.17,739.50 971.79,739.50C974.40,739.50 974.40,739.50 977.02,739.50C979.63,739.50 979.63,739.50 982.25,739.50C984.87,739.50 984.87,727.69 987.48,727.69C990.10,727.69 990.10,739.50 992.71,739.50C995.33,739.50 995.33,728.33 997.94,728.33C1000.56,728.33 1000.56,739.50 1003.17,739.50C1005.79,739.50 1005.79,722.37 1008.40,722.37C1011.01,722.37 1011.01,739.50 1013.63,739.50C1016.25,739.50 1016.25,721.88 1018.86,721.88C1021.47,721.88 1021.47,721.88 1024.09,721.88C1026.70,721.88 1026.70,725.86 1029.32,725.86C1031.93,725.86 1031.93,739.50 1034.55,739.50C1037.16,739.50 1037.16,739.50 1039.78,739.50C1042.39,739.50 1042.39,739.50 1045.01,739.50C1047.62,739.50 1047.62,739.50 1050.24,739.50C1052.86,739.50 1052.86,724.70 1055.47,724.70C1058.09,724.70 1058.09,720.89 1060.70,720.89C1063.32,720.89 1063.32,739.50 1065.93,739.50C1068.55,739.50 1068.55,739.50 1071.16,739.50C1073.78,739.50 1073.78,724.87 1076.39,724.87C1079.01,724.87 1079.01,739.50 1081.62,739.50C1084.23,739.50 1084.23,739.50 1086.85,739.50C1089.46,739.50 1089.46,739.50 1092.08,739.50C1094.69,739.50 1094.69,739.50 1097.31,739.50C1099.92,739.50 1099.92,739.50 1102.54,739.50C1105.15,739.50 1105.15,721.66 1107.77,721.66C1110.38,721.66 1110.38,739.50 1113.00,739.50C1115.62,739.50 1115.62,739.50 1118.23,739.50C1120.85,739.50 1120.85,722.93 1123.46,722.93C1126.08,722.93 1126.08,739.50 1128.69,739.50C1131.31,739.50 1131.31,739.50 1133.92,739.50C1136.54,739.50 1136.54,739.50 1139.15,739.50C1141.77,739.50 1141.77,727.51 1144.38,727.51C1147.00,727.51 1147.00,739.50 1149.61,739.50C1152.23,739.50 1152.23,739.50 1154.84,739.50C1157.46,739.50 1157.46,739.50 1160.07,739.50C1162.68,739.50 1162.68,739.50 1165.30,739.50C1167.91,739.50 1167.91,724.91 1170.53,724.91C1173.14,724.91 1173.14,739.50 1175.76,739.50C1178.38,739.50 1178.38,707.99 1180.99,707.99C1183.61,707.99 1183.61,739.50 1186.22,739.50C1188.84,739.50 1188.84,739.50 1191.45,739.50C1194.07,739.50 1194.07,739.50 1196.68,739.50C1199.30,739.50 1199.30,739.50 1201.91,739.50C1204.53,739.50 1204.53,723.88 1207.14,723.88C1209.76,723.88 1209.76,727.51 1212.37,727.51C1214.98,727.51 1214.98,739.50 1217.60,739.50C1220.21,739.50 1220.21,724.91 1222.83,724.91C1225.44,724.91 1225.44,728.22 1228.06,728.22C1230.67,728.22 1230.67,726.88 1233.29,726.88C1235.90,726.88 1235.90,739.50 1238.52,739.50C1241.13,739.50 1241.13,739.50 1243.75,739.50C1246.37,739.50 1246.37,717.08 1248.98,717.08C1251.60,717.08 1251.60,717.75 1254.21,717.75C1256.83,717.75 1256.83,739.50 1259.44,739.50C1262.06,739.50 1262.06,739.50 1264.67,739.50C1267.29,739.50 1267.29,739.50 1269.90,739.50C1272.52,739.50 1272.52,739.50 1275.13,739.50C1277.75,739.50 1277.75,739.50 1280.36,739.50C1282.98,739.50 1282.98,739.50 1285.59,739.50C1288.21,739.50 1288.21,739.50 1290.82,739.50C1293.43,739.50 1293.43,739.50 1296.05,739.50C1298.66,739.50 1298.66,739.50 1301.28,739.50C1303.89,739.50 1303.89,739.50 1306.51,739.50C1309.12,739.50 1309.12,739.50 1311.74,739.50C1314.36,739.50 1314.36,739.50 1316.97,739.50" fill="none" stroke="#3b97cf" stroke-width="1.8"/><path d="M929,793.3 H940.5" stroke="#3b97cf" stroke-width="2"/><path d="M1052,793.3 H1063" stroke="#8fbfdc" stroke-width="1.5" stroke-dasharray="1.5 2"/><circle cx="856.9" cy="730.0" r="0.8" fill="#9cc6e0"/><circle cx="909.4" cy="720.0" r="0.8" fill="#9cc6e0"/><circle cx="913.1" cy="720.0" r="0.8" fill="#9cc6e0"/><circle cx="925.0" cy="723.1" r="0.8" fill="#9cc6e0"/><circle cx="935.0" cy="730.6" r="0.8" fill="#9cc6e0"/><circle cx="940.6" cy="726.9" r="0.8" fill="#9cc6e0"/><circle cx="951.2" cy="728.1" r="0.8" fill="#9cc6e0"/><circle cx="955.0" cy="728.1" r="0.8" fill="#9cc6e0"/><circle cx="976.9" cy="729.0" r="0.8" fill="#9cc6e0"/><circle cx="1013.8" cy="727.5" r="0.8" fill="#9cc6e0"/><circle cx="1029.4" cy="719.1" r="0.8" fill="#9cc6e0"/><circle cx="1050.0" cy="721.9" r="0.8" fill="#9cc6e0"/><circle cx="1091.9" cy="720.9" r="0.8" fill="#9cc6e0"/><circle cx="1094.5" cy="723.2" r="0.8" fill="#9cc6e0"/><circle cx="1097.8" cy="725.2" r="0.8" fill="#9cc6e0"/><circle cx="1100.4" cy="722.6" r="0.8" fill="#9cc6e0"/><circle cx="1103.0" cy="720.6" r="0.8" fill="#9cc6e0"/><circle cx="1106.3" cy="719.3" r="0.8" fill="#9cc6e0"/><circle cx="1112.8" cy="727.4" r="0.8" fill="#9cc6e0"/><circle cx="1165.5" cy="728.2" r="0.8" fill="#9cc6e0"/><circle cx="1181.2" cy="729.1" r="0.8" fill="#9cc6e0"/><circle cx="1207.2" cy="730.0" r="0.8" fill="#9cc6e0"/><circle cx="1238.5" cy="714.4" r="0.8" fill="#9cc6e0"/><circle cx="1269.8" cy="716.7" r="0.8" fill="#9cc6e0"/><circle cx="1296.1" cy="731.0" r="0.8" fill="#9cc6e0"/><circle cx="1306.5" cy="733.0" r="0.8" fill="#9cc6e0"/><circle cx="1316.9" cy="728.7" r="0.8" fill="#9cc6e0"/><path d="M284.8,911.7 H757.5" stroke="#ebebeb" stroke-width="1"/><path d="M431.1,955 Q432.1,940.3 433.6,940.3 Q435.1,940.3 436.1,955" fill="none" stroke="#8fbfdc" stroke-width="1.3" stroke-dasharray="1.3 1.7"/><path d="M452.5,955 Q453.5,931.5 455.0,931.5 Q456.5,931.5 457.5,955" fill="none" stroke="#8fbfdc" stroke-width="1.3" stroke-dasharray="1.3 1.7"/><path d="M494.5,955 Q495.5,927.7 497.0,927.7 Q498.5,927.7 499.5,955" fill="none" stroke="#8fbfdc" stroke-width="1.3" stroke-dasharray="1.3 1.7"/><path d="M531.8,955 Q532.8,930.6 534.3,930.6 Q535.8,930.6 536.8,955" fill="none" stroke="#8fbfdc" stroke-width="1.3" stroke-dasharray="1.3 1.7"/><path d="M574.7,955 Q575.7,941.7 577.2,941.7 Q578.7,941.7 579.7,955" fill="none" stroke="#8fbfdc" stroke-width="1.3" stroke-dasharray="1.3 1.7"/><path d="M611.5,955 Q612.5,935.3 614.0,935.3 Q615.5,935.3 616.5,955" fill="none" stroke="#8fbfdc" stroke-width="1.3" stroke-dasharray="1.3 1.7"/><path d="M717.7,955 Q718.7,944.6 720.2,944.6 Q721.7,944.6 722.7,955" fill="none" stroke="#8fbfdc" stroke-width="1.3" stroke-dasharray="1.3 1.7"/><path d="M847.7,911.7 H1317.5" stroke="#ebebeb" stroke-width="1"/><path d="M1103,955 Q1105,936 1106,936 Q1107,936 1109,955" fill="none" stroke="#3b97cf" stroke-width="1.5"/></svg>
<div class="a" style="left:0.00px;top:947.60px;width:1919.00px;height:1.20px;background:#b6bcc5"></div>
<div class="a" style="left:0.00px;top:948.80px;width:1919.00px;height:1.20px;background:#e8ebef"></div>
</body></html>
